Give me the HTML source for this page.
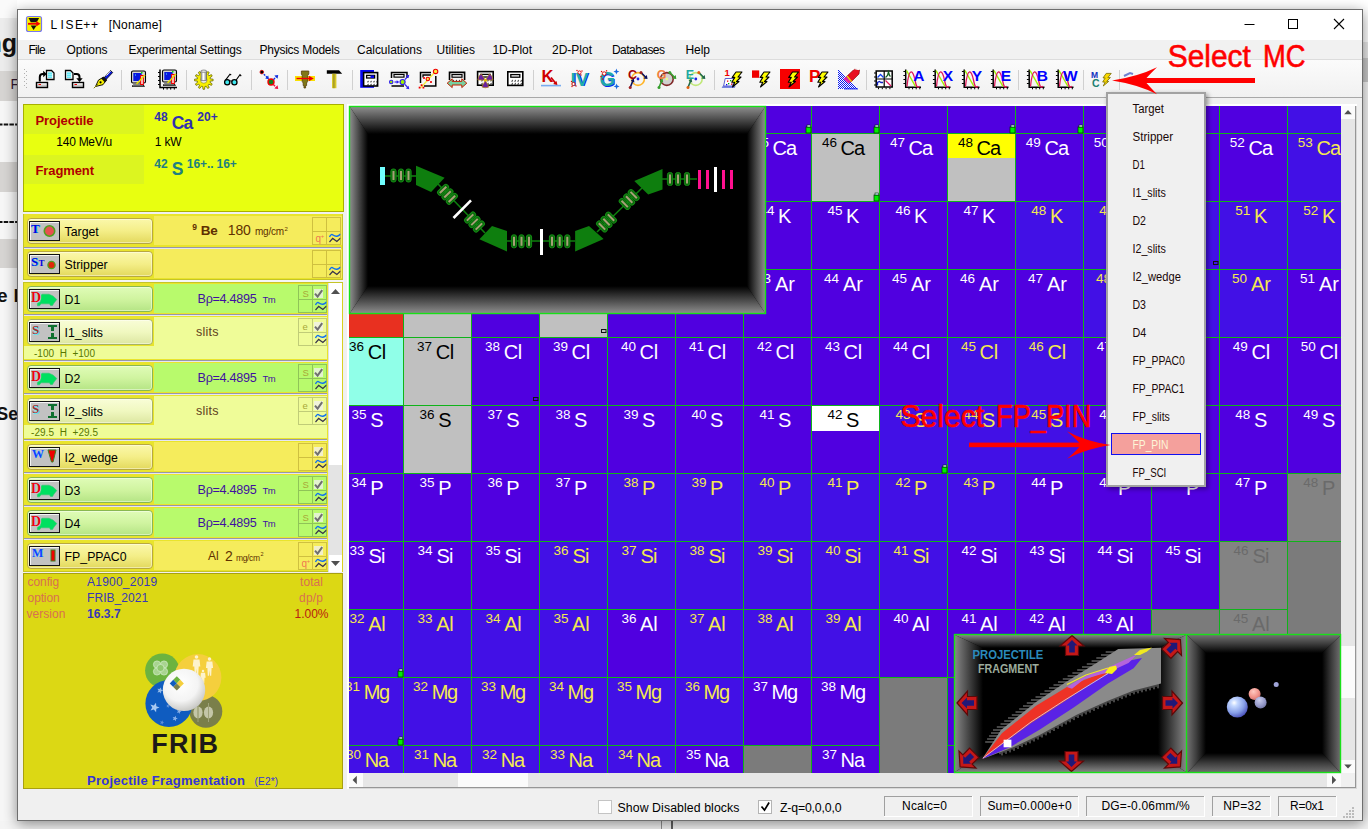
<!DOCTYPE html>
<html><head><meta charset="utf-8"><title>LISE++ [Noname]</title>
<style>html,body{margin:0;padding:0;background:#fff;overflow:hidden}svg{display:block}text{font-family:"Liberation Sans",sans-serif;white-space:pre}</style></head>
<body>
<svg width="1368" height="829" viewBox="0 0 1368 829">
<defs>
<filter id="wshadow" x="-5%" y="-5%" width="110%" height="112%"><feGaussianBlur in="SourceAlpha" stdDeviation="7"/><feOffset dy="3"/><feComponentTransfer><feFuncA type="linear" slope="0.45"/></feComponentTransfer><feMerge><feMergeNode/><feMergeNode in="SourceGraphic"/></feMerge></filter>
<linearGradient id="bg_yellow" x1="0" y1="0" x2="0" y2="1"><stop offset="0" stop-color="#fbf8ac"/><stop offset=".5" stop-color="#f4ee88"/><stop offset="1" stop-color="#e2d85c"/></linearGradient>
<linearGradient id="bg_green" x1="0" y1="0" x2="0" y2="1"><stop offset="0" stop-color="#e0fcb8"/><stop offset=".5" stop-color="#d0f4a0"/><stop offset="1" stop-color="#b4e484"/></linearGradient>
<linearGradient id="bg_pale" x1="0" y1="0" x2="0" y2="1"><stop offset="0" stop-color="#f9fdd8"/><stop offset=".5" stop-color="#f0f8c0"/><stop offset="1" stop-color="#dce6a0"/></linearGradient>
<radialGradient id="sphere" cx=".42" cy=".35" r=".75"><stop offset="0" stop-color="#ffffff"/><stop offset=".55" stop-color="#f4f4f4"/><stop offset="1" stop-color="#b8b8b4"/></radialGradient>

<linearGradient id="bvT" x1="0" y1="0" x2="0" y2="1"><stop offset="0" stop-color="#8c8c8c"/><stop offset="1" stop-color="#000"/></linearGradient>
<linearGradient id="bvB" x1="0" y1="1" x2="0" y2="0"><stop offset="0" stop-color="#8c8c8c"/><stop offset="1" stop-color="#000"/></linearGradient>
<linearGradient id="bvL" x1="0" y1="0" x2="1" y2="0"><stop offset="0" stop-color="#8c8c8c"/><stop offset="1" stop-color="#000"/></linearGradient>
<linearGradient id="bvR" x1="1" y1="0" x2="0" y2="0"><stop offset="0" stop-color="#8c8c8c"/><stop offset="1" stop-color="#000"/></linearGradient>
<linearGradient id="bwT" x1="0" y1="0" x2="0" y2="1"><stop offset="0" stop-color="#868686"/><stop offset="1" stop-color="#000"/></linearGradient>
<linearGradient id="bwB" x1="0" y1="1" x2="0" y2="0"><stop offset="0" stop-color="#868686"/><stop offset="1" stop-color="#000"/></linearGradient>
<linearGradient id="bwL" x1="0" y1="0" x2="1" y2="0"><stop offset="0" stop-color="#868686"/><stop offset="1" stop-color="#000"/></linearGradient>
<linearGradient id="bwR" x1="1" y1="0" x2="0" y2="0"><stop offset="0" stop-color="#868686"/><stop offset="1" stop-color="#000"/></linearGradient>
<radialGradient id="sphB" cx=".35" cy=".3" r=".8"><stop offset="0" stop-color="#ffffff"/><stop offset=".2" stop-color="#c4d8ff"/><stop offset=".6" stop-color="#88a0e8"/><stop offset="1" stop-color="#3c40b0"/></radialGradient>
<radialGradient id="sphP" cx=".4" cy=".3" r=".8"><stop offset="0" stop-color="#ffc8c0"/><stop offset=".6" stop-color="#f09088"/><stop offset="1" stop-color="#c06868"/></radialGradient>
<radialGradient id="sphG" cx=".4" cy=".3" r=".8"><stop offset="0" stop-color="#c8ccec"/><stop offset=".6" stop-color="#9498c8"/><stop offset="1" stop-color="#686c98"/></radialGradient>
<filter id="mshadow" x="-10%" y="-5%" width="125%" height="110%"><feGaussianBlur in="SourceAlpha" stdDeviation="2.5"/><feOffset dx="2" dy="2"/><feComponentTransfer><feFuncA type="linear" slope="0.4"/></feComponentTransfer><feMerge><feMergeNode/><feMergeNode in="SourceGraphic"/></feMerge></filter>
<linearGradient id="cyl" x1="0" y1="0" x2="1" y2="0"><stop offset="0" stop-color="#a0a0a0"/><stop offset=".45" stop-color="#ffffff"/><stop offset="1" stop-color="#808080"/></linearGradient>
<pattern id="chk" width="2" height="2" patternUnits="userSpaceOnUse"><rect width="2" height="2" fill="#fff"/><rect width="1" height="1" fill="#0818f0"/><rect x="1" y="1" width="1" height="1" fill="#0818f0"/></pattern>
<linearGradient id="tbg" x1="0" y1="0" x2="0" y2="1"><stop offset="0" stop-color="#fbfbfb"/><stop offset="1" stop-color="#f1f1f1"/></linearGradient>
<linearGradient id="bzT" x1="0" y1="0" x2="0" y2="1"><stop offset="0" stop-color="#727272"/><stop offset=".5" stop-color="#3c3c3c"/><stop offset="1" stop-color="#000"/></linearGradient>
<linearGradient id="bzB" x1="0" y1="1" x2="0" y2="0"><stop offset="0" stop-color="#727272"/><stop offset=".5" stop-color="#3c3c3c"/><stop offset="1" stop-color="#000"/></linearGradient>
<linearGradient id="bzL" x1="0" y1="0" x2="1" y2="0"><stop offset="0" stop-color="#727272"/><stop offset=".5" stop-color="#3c3c3c"/><stop offset="1" stop-color="#000"/></linearGradient>
<linearGradient id="bzR" x1="1" y1="0" x2="0" y2="0"><stop offset="0" stop-color="#727272"/><stop offset=".5" stop-color="#3c3c3c"/><stop offset="1" stop-color="#000"/></linearGradient>
</defs>

<rect x="0" y="0" width="1368" height="829" fill="#ffffff"/>
<rect x="0" y="0" width="17" height="18" fill="#fafafa"/>
<rect x="0" y="18" width="17" height="53" fill="#ececec"/>
<text x="-13.5" y="51.7" font-size="25" fill="#111" font-weight="bold">ng</text>
<rect x="0" y="71" width="17" height="30" fill="#d6d4d2"/>
<text x="10.5" y="89.4" font-size="14" fill="#301830">Fi</text>
<rect x="0" y="101" width="17" height="61" fill="#f6f6f6"/>
<path d="M-2 124.5H17" stroke="#111" stroke-width="2" stroke-dasharray="4.5 1.2"/>
<rect x="0" y="162" width="17" height="30" fill="#d6d4d2"/>
<rect x="0" y="192" width="17" height="47" fill="#f6f6f6"/>
<path d="M-2 222H17" stroke="#111" stroke-width="2" stroke-dasharray="4.5 1.2"/>
<rect x="0" y="239" width="17" height="29" fill="#d6d4d2"/>
<rect x="0" y="268" width="17" height="561" fill="#f6f6f6"/>
<text x="-3" y="301.5" font-size="19" fill="#111" font-weight="bold">e</text>
<text x="13.5" y="301.5" font-size="19" fill="#111" font-weight="bold">P</text>
<text x="-3.5" y="420" font-size="17.5" fill="#111" font-weight="bold">Se</text>
<rect x="1363" y="0" width="5" height="42" fill="#ffffff"/>
<rect x="1363" y="42" width="5" height="16" fill="#e8e8e8"/>
<rect x="1363" y="58" width="5" height="24" fill="#c8c8c8"/>
<rect x="1363" y="82" width="5" height="747" fill="#f4f4f4"/>
<rect x="0" y="821" width="1368" height="8" fill="#f4f4f4"/>
<rect x="661" y="821" width="1" height="8" fill="#909090"/>
<rect x="671" y="821" width="2" height="8" fill="#606060"/>
<rect x="17" y="9" width="1346" height="812" fill="#f0f0f0" filter="url(#wshadow)"/>
<rect x="17.5" y="9.5" width="1345" height="811" fill="#f0f0f0" stroke="#6e6e6e" stroke-width="1"/>
<rect x="18" y="10" width="1344" height="30" fill="#ffffff"/>
<rect x="26.5" y="16.5" width="15" height="15" fill="#f8f400" stroke="#7878f0" stroke-width="1.2" rx="2"/>
<path d="M28.5 18h10.6l-2.3 4.2h-6z" fill="#111"/>
<path d="M30.7 25.6h5.8l-2.9 4.4z" fill="#111"/>
<path d="M28 23.8h9" stroke="#f00000" stroke-width="1.8"/><path d="M36.2 21l4.2 2.8-4.2 2.8z" fill="#f00000"/>
<text x="50.4 57 60.6 63 65.4 72 75 81 83.2 89 91.1" y="28.8" font-size="12" fill="#000">L I S E + +</text>
<text x="108.8" y="28.8" font-size="12" fill="#000" textLength="53" lengthAdjust="spacing">[Noname]</text>
<path d="M1244.5 24.5h10" stroke="#000" stroke-width="1"/>
<rect x="1288.5" y="19.5" width="9" height="9" fill="none" stroke="#000" stroke-width="1"/>
<path d="M1334 19l10 10M1344 19l-10 10" stroke="#000" stroke-width="1.1"/>
<rect x="18" y="40" width="1344" height="19" fill="#f1f1f1"/>
<rect x="18" y="59" width="1344" height="1" fill="#dcdcdc"/>
<text x="28.4" y="53.8" font-size="12" fill="#000" textLength="17.4" lengthAdjust="spacing">File</text>
<text x="66.6" y="53.8" font-size="12" fill="#000" textLength="41" lengthAdjust="spacing">Options</text>
<text x="128.4" y="53.8" font-size="12" fill="#000" textLength="113.4" lengthAdjust="spacing">Experimental Settings</text>
<text x="259.5" y="53.8" font-size="12" fill="#000" textLength="80.2" lengthAdjust="spacing">Physics Models</text>
<text x="357" y="53.8" font-size="12" fill="#000" textLength="65" lengthAdjust="spacing">Calculations</text>
<text x="436.5" y="53.8" font-size="12" fill="#000" textLength="38.5" lengthAdjust="spacing">Utilities</text>
<text x="492.5" y="53.8" font-size="12" fill="#000" textLength="39.5" lengthAdjust="spacing">1D-Plot</text>
<text x="552" y="53.8" font-size="12" fill="#000" textLength="40" lengthAdjust="spacing">2D-Plot</text>
<text x="612" y="53.8" font-size="12" fill="#000" textLength="53" lengthAdjust="spacing">Databases</text>
<text x="685.5" y="53.8" font-size="12" fill="#000" textLength="24.5" lengthAdjust="spacing">Help</text>
<rect x="18" y="60" width="1344" height="37" fill="url(#tbg)"/>
<rect x="18" y="97" width="1344" height="1" fill="#a8a8a8"/>
<rect x="24" y="69" width="1" height="1" fill="#b0b0b0"/>
<rect x="26" y="71" width="1" height="1" fill="#b0b0b0"/>
<rect x="24" y="73" width="1" height="1" fill="#b0b0b0"/>
<rect x="26" y="75" width="1" height="1" fill="#b0b0b0"/>
<rect x="24" y="77" width="1" height="1" fill="#b0b0b0"/>
<rect x="26" y="79" width="1" height="1" fill="#b0b0b0"/>
<rect x="24" y="81" width="1" height="1" fill="#b0b0b0"/>
<rect x="26" y="83" width="1" height="1" fill="#b0b0b0"/>
<rect x="24" y="85" width="1" height="1" fill="#b0b0b0"/>
<rect x="26" y="87" width="1" height="1" fill="#b0b0b0"/>
<rect x="121" y="70" width="1" height="20" fill="#d0d0d0"/>
<rect x="186" y="70" width="1" height="20" fill="#d0d0d0"/>
<rect x="251" y="70" width="1" height="20" fill="#d0d0d0"/>
<rect x="287" y="70" width="1" height="20" fill="#d0d0d0"/>
<rect x="352" y="70" width="1" height="20" fill="#d0d0d0"/>
<rect x="533" y="70" width="1" height="20" fill="#d0d0d0"/>
<rect x="714" y="70" width="1" height="20" fill="#d0d0d0"/>
<rect x="866" y="70" width="1" height="20" fill="#d0d0d0"/>
<rect x="1018" y="70" width="1" height="20" fill="#d0d0d0"/>
<rect x="1083" y="70" width="1" height="20" fill="#d0d0d0"/>
<rect x="36.5" y="82.5" width="11" height="5" fill="#c8c8c8" stroke="#000" stroke-width="1.4"/>
<rect x="37.5" y="83.5" width="9" height="1" fill="#fff"/>
<rect x="38.5" y="84" width="2.5" height="1" fill="#f00000"/>
<path d="M46.5 70.5h5l2.5 2.5v6.5h-7.5z" fill="#fff" stroke="#000" stroke-width="1.3"/>
<rect x="47.8" y="72.6" width="4.4" height="1" fill="#00d8f0"/>
<rect x="47.8" y="74.6" width="4.4" height="1" fill="#00d8f0"/>
<rect x="47.8" y="76.6" width="4.4" height="1" fill="#00d8f0"/>
<path d="M39.8 81.5V77q0-3 3-3h1.5" fill="none" stroke="#000" stroke-width="2"/>
<path d="M43.2 70.8l3.6 3.2-3.6 3.2z" fill="#000"/>
<path d="M65.5 70.5h5l2.5 2.5v6.5h-7.5z" fill="#fff" stroke="#000" stroke-width="1.3"/>
<rect x="66.8" y="72.6" width="4.4" height="1" fill="#00d8f0"/>
<rect x="66.8" y="74.6" width="4.4" height="1" fill="#00d8f0"/>
<rect x="66.8" y="76.6" width="4.4" height="1" fill="#00d8f0"/>
<rect x="72.5" y="82.5" width="11" height="5" fill="#c8c8c8" stroke="#000" stroke-width="1.4"/>
<rect x="73.5" y="83.5" width="9" height="1" fill="#fff"/>
<rect x="74.5" y="84" width="2.5" height="1" fill="#f00000"/>
<path d="M74 74h2.5q3 0 3 3v2" fill="none" stroke="#000" stroke-width="2"/>
<path d="M76.3 78.2h6.4l-3.2 3.8z" fill="#000"/>
<path d="M103 79l7.5-8.5 2.2 2-8 8.5z" fill="#0818d8" stroke="#000" stroke-width="0.8"/>
<path d="M106.5 75.5l4-4.5" fill="none" stroke="#fff" stroke-width="1"/>
<path d="M95.5 86.5l3-6.5 4.5-2.5 3 3-3 4.2z" fill="#f8f000" stroke="#000" stroke-width="0.9"/>
<circle cx="100.5" cy="82.3" r="1.1" fill="#000"/>
<path d="M93.8 88.2l4.5-4.3" fill="none" stroke="#808000" stroke-width="1"/>
<path d="M101.2 78.6l2.6-2 3.4 3.4-2.2 2.4z" fill="#111"/>
<path d="M131.5 72.5q0-1.5 1.5-1.5h11q1.5 0 1.5 1.5v9q0 1.5-1.5 1.5h-11q-1.5 0-1.5-1.5z" fill="#d4d4d4" stroke="#000" stroke-width="1.1"/>
<rect x="133.3" y="73" width="8.4" height="8" fill="#0818e0"/>
<rect x="135.0" y="74.5" width="1" height="1" fill="#40f0ff"/>
<path d="M133.5 85h9.5l1.5 1.3h-12.5z" fill="#e8e8e8" stroke="#000" stroke-width="0.9"/>
<path d="M140.7 75.5h2.6v9h-2.6z" fill="#fff" stroke="#f00000" stroke-width="1.2"/>
<path d="M136.5 84l8.5-9" fill="none" stroke="#e8e000" stroke-width="1.4"/>
<rect x="141.0" y="72" width="1.5" height="1.5" fill="#00e000"/>
<path d="M162.5 71.5q0-1.5 1.5-1.5h11q1.5 0 1.5 1.5v9q0 1.5-1.5 1.5h-11q-1.5 0-1.5-1.5z" fill="#d4d4d4" stroke="#000" stroke-width="1.1"/>
<rect x="164.3" y="72" width="8.4" height="8" fill="#0818e0"/>
<rect x="166.0" y="73.5" width="1" height="1" fill="#40f0ff"/>
<path d="M164.5 84h9.5l1.5 1.3h-12.5z" fill="#e8e8e8" stroke="#000" stroke-width="0.9"/>
<path d="M171.7 74.5h2.6v9h-2.6z" fill="#fff" stroke="#f00000" stroke-width="1.2"/>
<path d="M167.5 83l8.5-9" fill="none" stroke="#e8e000" stroke-width="1.4"/>
<rect x="172.0" y="71" width="1.5" height="1.5" fill="#00e000"/>
<path d="M160 69.5V87.5H177" fill="none" stroke="#000" stroke-width="1.5"/>
<rect x="158" y="72" width="2" height="1" fill="#000"/>
<rect x="163.0" y="88" width="1" height="1.6" fill="#000"/>
<rect x="158" y="76" width="2" height="1" fill="#000"/>
<rect x="166.6" y="88" width="1" height="1.6" fill="#000"/>
<rect x="158" y="80" width="2" height="1" fill="#000"/>
<rect x="170.2" y="88" width="1" height="1.6" fill="#000"/>
<rect x="158" y="84" width="2" height="1" fill="#000"/>
<rect x="173.8" y="88" width="1" height="1.6" fill="#000"/>
<polygon points="213.1,79.2 213.1,80.8 210.3,81.1 210.0,82.3 212.2,83.9 211.4,85.4 208.9,84.2 208.0,85.1 209.2,87.6 207.7,88.4 206.1,86.2 204.9,86.5 204.6,89.3 203.0,89.3 202.7,86.5 201.5,86.2 199.9,88.4 198.4,87.6 199.6,85.1 198.7,84.2 196.2,85.4 195.4,83.9 197.6,82.3 197.3,81.1 194.5,80.8 194.5,79.2 197.3,78.9 197.6,77.7 195.4,76.1 196.2,74.6 198.7,75.8 199.6,74.9 198.4,72.4 199.9,71.6 201.5,73.8 202.7,73.5 203.0,70.7 204.6,70.7 204.9,73.5 206.1,73.8 207.7,71.6 209.2,72.4 208.0,74.9 208.9,75.8 211.4,74.6 212.2,76.1 210.0,77.7 210.3,78.9" fill="#f8f000" stroke="#6a6a00" stroke-width=".8"/>
<circle cx="203.8" cy="80" r="3.3" fill="#e8e8e8" stroke="#909000" stroke-width="0.6"/>
<rect x="201" y="71" width="5.6" height="9.5" fill="url(#cyl)" stroke="#606060" stroke-width=".6"/>
<ellipse cx="203.8" cy="71.2" rx="2.8" ry="1.2" fill="#e8e8e8" stroke="#606060" stroke-width=".6"/>
<circle cx="227.2" cy="82.2" r="2.6" fill="#40e8f0" stroke="#000" stroke-width="1.3"/>
<circle cx="234.4" cy="82.2" r="2.6" fill="#40e8f0" stroke="#000" stroke-width="1.3"/>
<path d="M229.6 81.3q1.2-1 2.4 0" fill="none" stroke="#000" stroke-width="1"/>
<path d="M225.5 80.2l4.5-6 1.2.8" fill="none" stroke="#000" stroke-width="1.1"/>
<path d="M236 80.2l4-5.5 1.2 1.5" fill="none" stroke="#000" stroke-width="1.1"/>
<circle cx="261.8" cy="72.1" r="1.8" fill="#000" stroke="#e00000" stroke-width="0.8"/>
<path d="M263.8 74.2l4 3.8" fill="none" stroke="#1030e0" stroke-width="1.4" stroke-dasharray="2 1"/>
<path d="M269 79.2l-3.8-.6 3-3z" fill="#1030e0"/>
<circle cx="271" cy="82" r="3" fill="#108020" stroke="#f00000" stroke-width="1.4"/>
<path d="M273.6 79.4l3-3" fill="none" stroke="#1030e0" stroke-width="1.4" stroke-dasharray="2 1"/>
<path d="M278.2 75l-3.8.6 3.2 3.2z" fill="#1030e0"/>
<path d="M273.6 84.8l3 3" fill="none" stroke="#f01040" stroke-width="1.4" stroke-dasharray="2 1"/>
<path d="M278.2 89l-3.8-.6 3.2-3.2z" fill="#f01040"/>
<rect x="295" y="76" width="20" height="5" fill="#f8e000"/>
<path d="M301.4 71h7.4v3l-1.2 1.5v6l-1 1.5v2.5h-1v2.5h-1.6v-2.5h-.8v-2.5l-1-1.5v-6l-.8-1.5z" fill="#807818" stroke="#584010" stroke-width="0.8"/>
<path d="M296.5 78.5h13" fill="none" stroke="#f00000" stroke-width="1.4"/>
<path d="M313.8 78.5l-5-2.8v5.6z" fill="#f00000"/>
<path d="M326.8 70.2h12.2l3.2 3.6h-15.4z" fill="#000"/>
<rect x="332" y="73.8" width="4.4" height="14.4" fill="#d8c828"/>
<rect x="333.2" y="73.8" width="1.4" height="14.4" fill="#a09828"/>
<rect x="360.2" y="70" width="13.8" height="17.8" fill="#0808f0"/>
<rect x="363.6" y="72.6" width="14" height="13.4" fill="#fff" stroke="#000" stroke-width="1.6"/>
<rect x="366.6" y="75.39999999999999" width="8" height="2.6" fill="#fff" stroke="#000" stroke-width="1.3"/>
<path d="M366.90000000000003 82.19999999999999l1.6-1.8v1.8z" fill="#000"/>
<path d="M369.90000000000003 82.19999999999999l1.6-1.8v1.8z" fill="#000"/>
<path d="M372.90000000000003 82.19999999999999l1.6-1.8v1.8z" fill="#000"/>
<path d="M375.90000000000003 82.19999999999999l1.6-1.8v1.8z" fill="#000"/>
<path d="M366.90000000000003 85.19999999999999l1.6-1.8v1.8z" fill="#000"/>
<path d="M369.90000000000003 85.19999999999999l1.6-1.8v1.8z" fill="#000"/>
<path d="M372.90000000000003 85.19999999999999l1.6-1.8v1.8z" fill="#000"/>
<path d="M375.90000000000003 85.19999999999999l1.6-1.8v1.8z" fill="#000"/>
<rect x="370.5" y="75.4" width="3.5" height="2.6" fill="#0808f0"/>
<path d="M391.5 78V72.4H407V78M391.5 86H404" fill="none" stroke="#000" stroke-width="1.5"/>
<rect x="394" y="74.5" width="10" height="2.6" fill="#fff" stroke="#000" stroke-width="1.2"/>
<circle cx="391.2" cy="82" r="1.7" fill="#a0f000" stroke="#3020f0" stroke-width="1.1"/>
<path d="M394.5 82h3" fill="none" stroke="#3020f0" stroke-width="1.2"/>
<path d="M399.3 82l-2.6-1.8v3.6z" fill="#3020f0"/>
<circle cx="402.6" cy="82" r="2.5" fill="#a0f000" stroke="#3020f0" stroke-width="1.2"/>
<path d="M405 79.5l2.6-2.8" fill="none" stroke="#3020f0" stroke-width="1.2"/>
<path d="M409.3 74.8l-3.4.8 2.6 2.6z" fill="#3020f0"/>
<path d="M405 84.5l2.6 2.8" fill="none" stroke="#3020f0" stroke-width="1.2"/>
<path d="M409.3 89.2l-3.4-.8 2.6-2.6z" fill="#3020f0"/>
<path d="M420.5 83V72.4H431M435.8 76V86H424" fill="none" stroke="#000" stroke-width="1.5"/>
<path d="M423 77.5V75h8" fill="none" stroke="#000" stroke-width="1.3"/>
<path d="M420.5 88l14-15.5" fill="none" stroke="#f8f040" stroke-width="1.3"/>
<circle cx="435.6" cy="71.4" r="2.2" fill="#f8f040" stroke="#f00000" stroke-width="1.1"/>
<circle cx="427.8" cy="79" r="1.7" fill="#f8f040" stroke="#f00000" stroke-width="1.1"/>
<rect x="420.70000000000005" y="84.3" width="1.8" height="1.8" fill="#f00000"/>
<rect x="422.5" y="86.69999999999999" width="1.8" height="1.8" fill="#f00000"/>
<rect x="418.70000000000005" y="86.69999999999999" width="1.8" height="1.8" fill="#f00000"/>
<rect x="430.1" y="81.1" width="1.8" height="1.8" fill="#f00000"/>
<rect x="423.1" y="77.1" width="1.8" height="1.8" fill="#f00000"/>
<path d="M449.5 80V72.4H464.6V80" fill="none" stroke="#000" stroke-width="1.6"/>
<rect x="452" y="74.6" width="10" height="2.6" fill="#fff" stroke="#000" stroke-width="1.2"/>
<path d="M452.3 81.4l1.6-1.8v1.8z" fill="#000"/>
<path d="M455.3 81.4l1.6-1.8v1.8z" fill="#000"/>
<path d="M458.3 81.4l1.6-1.8v1.8z" fill="#000"/>
<path d="M461.3 81.4l1.6-1.8v1.8z" fill="#000"/>
<path d="M447.2 83.2l5-4.4v2.6h9.6v-2.6l5 4.4-5 4.4v-2.6h-9.6v2.6z" fill="#78d0a0" stroke="#c02000" stroke-width="1"/>
<rect x="477.6" y="71.6" width="15.6" height="13.6" fill="#fff" stroke="#000" stroke-width="1.6"/>
<rect x="480.6" y="74.39999999999999" width="9.6" height="2.6" fill="#fff" stroke="#000" stroke-width="1.3"/>
<path d="M480.90000000000003 81.19999999999999l1.6-1.8v1.8z" fill="#000"/>
<path d="M483.90000000000003 81.19999999999999l1.6-1.8v1.8z" fill="#000"/>
<path d="M486.90000000000003 81.19999999999999l1.6-1.8v1.8z" fill="#000"/>
<path d="M489.90000000000003 81.19999999999999l1.6-1.8v1.8z" fill="#000"/>
<path d="M480.90000000000003 84.19999999999999l1.6-1.8v1.8z" fill="#000"/>
<path d="M483.90000000000003 84.19999999999999l1.6-1.8v1.8z" fill="#000"/>
<path d="M486.90000000000003 84.19999999999999l1.6-1.8v1.8z" fill="#000"/>
<path d="M489.90000000000003 84.19999999999999l1.6-1.8v1.8z" fill="#000"/>
<path d="M485.4 80.2L477.8 79.9A7.6 7.6 0 0 1 481.4 73.8Z" fill="#6820a0" stroke="#c8a000" stroke-width="0.6"/>
<path d="M485.4 80.2L489.4 73.8A7.6 7.6 0 0 1 493.0 79.9Z" fill="#6820a0" stroke="#c8a000" stroke-width="0.6"/>
<path d="M485.4 80.2L489.0 86.9A7.6 7.6 0 0 1 481.8 86.9Z" fill="#6820a0" stroke="#c8a000" stroke-width="0.6"/>
<circle cx="485.4" cy="80.2" r="1.4" fill="#e8c000"/>
<rect x="507.8" y="71.8" width="15" height="13.6" fill="#fff" stroke="#000" stroke-width="1.6"/>
<rect x="510.8" y="74.6" width="9" height="2.6" fill="#fff" stroke="#000" stroke-width="1.3"/>
<path d="M511.1 81.39999999999999l1.6-1.8v1.8z" fill="#000"/>
<path d="M514.1 81.39999999999999l1.6-1.8v1.8z" fill="#000"/>
<path d="M517.1 81.39999999999999l1.6-1.8v1.8z" fill="#000"/>
<path d="M520.1 81.39999999999999l1.6-1.8v1.8z" fill="#000"/>
<path d="M511.1 84.39999999999999l1.6-1.8v1.8z" fill="#000"/>
<path d="M514.1 84.39999999999999l1.6-1.8v1.8z" fill="#000"/>
<path d="M517.1 84.39999999999999l1.6-1.8v1.8z" fill="#000"/>
<path d="M520.1 84.39999999999999l1.6-1.8v1.8z" fill="#000"/>
<text x="541.6" y="82" font-size="16.5" fill="#d00000" font-weight="bold">K</text>
<path d="M551 77.5l4.5 5.5" fill="none" stroke="#d00000" stroke-width="1.8"/>
<path d="M557.5 85.3l-4.4-1.2 3.4-3z" fill="#d00000"/>
<rect x="541" y="84.8" width="20" height="1.6" fill="#78acf0"/>
<text x="571.4" y="86.4" font-size="19" fill="#0818f0" font-weight="bold" textLength="18" lengthAdjust="spacing">IV</text>
<text x="570.4" y="85.6" font-size="19" fill="#20b0a8" font-weight="bold" textLength="18" lengthAdjust="spacing">IV</text>
<circle cx="579.5" cy="72.5" r="1.6" fill="#fff" stroke="#e00000" stroke-width="0.9"/>
<circle cx="573.5" cy="84" r="1.6" fill="#fff" stroke="#e00000" stroke-width="0.9"/>
<rect x="576.4" y="69.9" width="1.2" height="1.2" fill="#e00000"/>
<rect x="581.4" y="70.4" width="1.2" height="1.2" fill="#e00000"/>
<rect x="580.4" y="74.4" width="1.2" height="1.2" fill="#e00000"/>
<rect x="570.9" y="80.9" width="1.2" height="1.2" fill="#e00000"/>
<rect x="575.4" y="85.4" width="1.2" height="1.2" fill="#e00000"/>
<rect x="571.4" y="85.9" width="1.2" height="1.2" fill="#e00000"/>
<text x="600.2" y="86.6" font-size="20" fill="#0828f0" font-weight="bold">G</text>
<text x="599.4" y="85.8" font-size="20" fill="#20a8a8" font-weight="bold">G</text>
<path d="M616.4 68.6l.8 2.2 2.2.8-2.2.8-.8 2.2-.8-2.2-2.2-.8 2.2-.8z" fill="#1868e0"/>
<path d="M616.6 83.4l.8 2.2 2.2.8-2.2.8-.8 2.2-.8-2.2-2.2-.8 2.2-.8z" fill="#1868e0"/>
<circle cx="604.2" cy="73.6" r="1.8" fill="#fff" stroke="#e00000" stroke-width="0.9"/>
<rect x="600.9" y="70.9" width="1.3" height="1.3" fill="#e00000"/>
<rect x="605.9" y="70.2" width="1.3" height="1.3" fill="#e00000"/>
<rect x="600.4" y="75.9" width="1.3" height="1.3" fill="#e00000"/>
<rect x="601.9" y="78.4" width="1.3" height="1.3" fill="#e00000"/>
<circle cx="638" cy="79" r="6.4" fill="none" stroke="#ffb428" stroke-width="1.6"/>
<circle cx="638" cy="79" r="1.4" fill="#2020e0"/>
<path d="M641 72.5l5.5 5.5" fill="none" stroke="#081060" stroke-width="1.6"/>
<path d="M647.5 79l-4-.6 3.4-3.4z" fill="#081060"/>
<path d="M630.2 87.5l2.8-7" fill="none" stroke="#081060" stroke-width="1.6"/>
<path d="M633.8 78.2l.6 4.2-3.6-1.6z" fill="#081060"/>
<circle cx="641" cy="72.5" r="1.5" fill="#a02020"/>
<circle cx="630.2" cy="87.5" r="1.5" fill="#a02020"/>
<text x="628" y="78.5" font-size="12.5" fill="#a00008" font-weight="bold">C</text>
<circle cx="666.8" cy="79" r="6.4" fill="#d0d0d0" stroke="#802828" stroke-width="1.6"/>
<circle cx="666.8" cy="79" r="1.4" fill="#e8f890"/>
<path d="M669.8 72.5l5.5 5.5" fill="none" stroke="#38a030" stroke-width="1.6"/>
<path d="M676.3 79l-4-.6 3.4-3.4z" fill="#38a030"/>
<path d="M659.0 87.5l2.8-7" fill="none" stroke="#38a030" stroke-width="1.6"/>
<path d="M662.5999999999999 78.2l.6 4.2-3.6-1.6z" fill="#38a030"/>
<circle cx="669.8" cy="72.5" r="1.5" fill="#38a030"/>
<circle cx="659.0" cy="87.5" r="1.5" fill="#38a030"/>
<text x="656.8" y="78.5" font-size="12.5" fill="#f08040" font-weight="bold">G</text>
<circle cx="695.8" cy="79" r="6.4" fill="none" stroke="#c0e878" stroke-width="1.6"/>
<circle cx="695.8" cy="79" r="1.4" fill="#2020e0"/>
<path d="M698.8 72.5l5.5 5.5" fill="none" stroke="#206848" stroke-width="1.6"/>
<path d="M705.3 79l-4-.6 3.4-3.4z" fill="#206848"/>
<path d="M688.0 87.5l2.8-7" fill="none" stroke="#206848" stroke-width="1.6"/>
<path d="M691.5999999999999 78.2l.6 4.2-3.6-1.6z" fill="#206848"/>
<circle cx="698.8" cy="72.5" r="1.5" fill="#e06010"/>
<circle cx="688.0" cy="87.5" r="1.5" fill="#e06010"/>
<text x="685.8" y="78.5" font-size="12.5" fill="#20a8a0" font-weight="bold">E</text>
<text x="724.4" y="76.2" font-size="9.5" fill="#f00000" font-weight="bold">1</text>
<path d="M725.2 78.5h9l-1.6 7.5h-9z" fill="#fff" stroke="#3838c0" stroke-width="0.8"/>
<path d="M722.6 86.2h13l-1 1.6h-13z" fill="#5060d8"/>
<rect x="727" y="80.5" width="1.3" height="1.3" fill="#f00000"/>
<rect x="730" y="80" width="1.3" height="1.3" fill="#00a000"/>
<rect x="728" y="83" width="1.3" height="1.3" fill="#00a000"/>
<rect x="731" y="83.5" width="1.3" height="1.3" fill="#f00000"/>
<rect x="726" y="84" width="1.3" height="1.3" fill="#0000f0"/>
<path transform="translate(731,72) scale(1)" d="M5 0H11L7 5H10L5.5 9.5H8L1.5 15L3.8 10.3H.8L3.8 5.4H1.2Z" fill="#ffff00" stroke="#000" stroke-width="1.1" stroke-linejoin="round"/>
<rect x="752" y="70.4" width="7.2" height="7.4" fill="#f00000"/>
<path transform="translate(759,72) scale(1)" d="M5 0H11L7 5H10L5.5 9.5H8L1.5 15L3.8 10.3H.8L3.8 5.4H1.2Z" fill="#ffff00" stroke="#000" stroke-width="1.1" stroke-linejoin="round"/>
<rect x="780" y="69" width="20" height="20" fill="#f80000"/>
<path transform="translate(787.5,72) scale(1)" d="M5 0H11L7 5H10L5.5 9.5H8L1.5 15L3.8 10.3H.8L3.8 5.4H1.2Z" fill="#ffff00" stroke="#000" stroke-width="1.1" stroke-linejoin="round"/>
<text x="809" y="81.8" font-size="17" fill="#f00000" font-weight="bold">P</text>
<path transform="translate(817,72) scale(1)" d="M5 0H11L7 5H10L5.5 9.5H8L1.5 15L3.8 10.3H.8L3.8 5.4H1.2Z" fill="#ffff00" stroke="#000" stroke-width="1.1" stroke-linejoin="round"/>
<polygon points="838,69 858,89 838,89" fill="url(#chk)"/>
<rect x="844" y="88.4" width="14" height="1" fill="#0818f0"/>
<path d="M846.5 76.5l8-7.5 5 1-.5 4-8 8z" fill="#e81020" stroke="#800000" stroke-width="0.6"/>
<path d="M846.5 76.5l4.5 5.5-2.5 1.5-5-4.5z" fill="#e020a0"/>
<path d="M847 76l4.6 5.6" fill="none" stroke="#f0e000" stroke-width="1.2"/>
<path d="M850 70.5l4.5-1.8 4.5 1" fill="none" stroke="#fff" stroke-width="1"/>
<rect x="876.2" y="71" width="16" height="16" fill="#fff" stroke="#000" stroke-width="1.5"/>
<path d="M884.2 71v16M876.2 79h16" fill="none" stroke="#000" stroke-width="1.2"/>
<rect x="874" y="72.5" width="2" height="1" fill="#000"/>
<rect x="878.0" y="87.6" width="1" height="1.6" fill="#000"/>
<rect x="874" y="76.5" width="2" height="1" fill="#000"/>
<rect x="881.8" y="87.6" width="1" height="1.6" fill="#000"/>
<rect x="874" y="80.5" width="2" height="1" fill="#000"/>
<rect x="885.6" y="87.6" width="1" height="1.6" fill="#000"/>
<rect x="874" y="84.5" width="2" height="1" fill="#000"/>
<rect x="889.4" y="87.6" width="1" height="1.6" fill="#000"/>
<path d="M877.5 77.5l3-3 3 3" fill="none" stroke="#1040f0" stroke-width="1.3"/>
<path d="M885.5 77.5l2-2 1-3.5 1 3.5 1 1" fill="none" stroke="#106020" stroke-width="1.3"/>
<path d="M877.5 85.5v-3l2-1 1.5 1h2" fill="none" stroke="#1020c0" stroke-width="1.3"/>
<path d="M885.5 80.5l5.5 5.5" fill="none" stroke="#e01860" stroke-width="1.3"/>
<path d="M905.7 69.5V87.2H921" fill="none" stroke="#000" stroke-width="1.5"/>
<rect x="903.4" y="71" width="2" height="1" fill="#000"/>
<rect x="903.4" y="75" width="2" height="1" fill="#000"/>
<rect x="903.4" y="79" width="2" height="1" fill="#000"/>
<rect x="903.4" y="83" width="2" height="1" fill="#000"/>
<rect x="908.5" y="87.5" width="1" height="1.8" fill="#000"/>
<rect x="912.1" y="87.5" width="1" height="1.8" fill="#000"/>
<rect x="915.7" y="87.5" width="1" height="1.8" fill="#000"/>
<rect x="919.3" y="87.5" width="1" height="1.8" fill="#000"/>
<path d="M906.5 70.5L915.5 86.5" fill="none" stroke="#a0f000" stroke-width="1.5"/>
<path d="M907 86.5C909 66 913 70 915 80S918 86.5 919.5 86.5" fill="none" stroke="#e01858" stroke-width="1.3"/>
<text x="913.3" y="80.5" font-size="15.5" fill="#0000ff" font-weight="bold" textLength="10" lengthAdjust="spacing">A</text>
<path d="M935.2 69.5V87.2H950.5" fill="none" stroke="#000" stroke-width="1.5"/>
<rect x="932.9" y="71" width="2" height="1" fill="#000"/>
<rect x="932.9" y="75" width="2" height="1" fill="#000"/>
<rect x="932.9" y="79" width="2" height="1" fill="#000"/>
<rect x="932.9" y="83" width="2" height="1" fill="#000"/>
<rect x="938.0" y="87.5" width="1" height="1.8" fill="#000"/>
<rect x="941.6" y="87.5" width="1" height="1.8" fill="#000"/>
<rect x="945.2" y="87.5" width="1" height="1.8" fill="#000"/>
<rect x="948.8" y="87.5" width="1" height="1.8" fill="#000"/>
<path d="M936.0 70.5L945.0 86.5" fill="none" stroke="#a0f000" stroke-width="1.5"/>
<path d="M936.5 86.5C938.5 66 942.5 70 944.5 80S947.5 86.5 949.0 86.5" fill="none" stroke="#e01858" stroke-width="1.3"/>
<text x="942.8" y="80.5" font-size="15.5" fill="#0000ff" font-weight="bold" textLength="10" lengthAdjust="spacing">X</text>
<path d="M964.2 69.5V87.2H979.5" fill="none" stroke="#000" stroke-width="1.5"/>
<rect x="961.9" y="71" width="2" height="1" fill="#000"/>
<rect x="961.9" y="75" width="2" height="1" fill="#000"/>
<rect x="961.9" y="79" width="2" height="1" fill="#000"/>
<rect x="961.9" y="83" width="2" height="1" fill="#000"/>
<rect x="967.0" y="87.5" width="1" height="1.8" fill="#000"/>
<rect x="970.6" y="87.5" width="1" height="1.8" fill="#000"/>
<rect x="974.2" y="87.5" width="1" height="1.8" fill="#000"/>
<rect x="977.8" y="87.5" width="1" height="1.8" fill="#000"/>
<path d="M965.0 70.5L974.0 86.5" fill="none" stroke="#a0f000" stroke-width="1.5"/>
<path d="M965.5 86.5C967.5 66 971.5 70 973.5 80S976.5 86.5 978.0 86.5" fill="none" stroke="#e01858" stroke-width="1.3"/>
<text x="971.8" y="80.5" font-size="15.5" fill="#0000ff" font-weight="bold" textLength="10" lengthAdjust="spacing">Y</text>
<path d="M993.2 69.5V87.2H1008.5" fill="none" stroke="#000" stroke-width="1.5"/>
<rect x="990.9" y="71" width="2" height="1" fill="#000"/>
<rect x="990.9" y="75" width="2" height="1" fill="#000"/>
<rect x="990.9" y="79" width="2" height="1" fill="#000"/>
<rect x="990.9" y="83" width="2" height="1" fill="#000"/>
<rect x="996.0" y="87.5" width="1" height="1.8" fill="#000"/>
<rect x="999.6" y="87.5" width="1" height="1.8" fill="#000"/>
<rect x="1003.2" y="87.5" width="1" height="1.8" fill="#000"/>
<rect x="1006.8" y="87.5" width="1" height="1.8" fill="#000"/>
<path d="M994.0 70.5L1003.0 86.5" fill="none" stroke="#a0f000" stroke-width="1.5"/>
<path d="M994.5 86.5C996.5 66 1000.5 70 1002.5 80S1005.5 86.5 1007.0 86.5" fill="none" stroke="#e01858" stroke-width="1.3"/>
<text x="1000.8" y="80.5" font-size="15.5" fill="#0000ff" font-weight="bold" textLength="9.5" lengthAdjust="spacing">E</text>
<path d="M1029.2 69.5V87.2H1044.5" fill="none" stroke="#000" stroke-width="1.5"/>
<rect x="1026.9" y="71" width="2" height="1" fill="#000"/>
<rect x="1026.9" y="75" width="2" height="1" fill="#000"/>
<rect x="1026.9" y="79" width="2" height="1" fill="#000"/>
<rect x="1026.9" y="83" width="2" height="1" fill="#000"/>
<rect x="1032.0" y="87.5" width="1" height="1.8" fill="#000"/>
<rect x="1035.6" y="87.5" width="1" height="1.8" fill="#000"/>
<rect x="1039.2" y="87.5" width="1" height="1.8" fill="#000"/>
<rect x="1042.8" y="87.5" width="1" height="1.8" fill="#000"/>
<path d="M1030.0 70.5L1039.0 86.5" fill="none" stroke="#a0f000" stroke-width="1.5"/>
<path d="M1030.5 86.5C1032.5 66 1036.5 70 1038.5 80S1041.5 86.5 1043.0 86.5" fill="none" stroke="#e01858" stroke-width="1.3"/>
<text x="1036.8" y="80.5" font-size="15.5" fill="#0000ff" font-weight="bold" textLength="10" lengthAdjust="spacing">B</text>
<path d="M1058.2 69.5V87.2H1073.5" fill="none" stroke="#000" stroke-width="1.5"/>
<rect x="1055.9" y="71" width="2" height="1" fill="#000"/>
<rect x="1055.9" y="75" width="2" height="1" fill="#000"/>
<rect x="1055.9" y="79" width="2" height="1" fill="#000"/>
<rect x="1055.9" y="83" width="2" height="1" fill="#000"/>
<rect x="1061.0" y="87.5" width="1" height="1.8" fill="#000"/>
<rect x="1064.6" y="87.5" width="1" height="1.8" fill="#000"/>
<rect x="1068.2" y="87.5" width="1" height="1.8" fill="#000"/>
<rect x="1071.8" y="87.5" width="1" height="1.8" fill="#000"/>
<path d="M1059.0 70.5L1068.0 86.5" fill="none" stroke="#a0f000" stroke-width="1.5"/>
<path d="M1059.5 86.5C1061.5 66 1065.5 70 1067.5 80S1070.5 86.5 1072.0 86.5" fill="none" stroke="#e01858" stroke-width="1.3"/>
<text x="1063.0" y="80.5" font-size="15.5" fill="#0000ff" font-weight="bold" textLength="13.5" lengthAdjust="spacing">W</text>
<text x="1091" y="78.2" font-size="8.5" fill="#1030c0" font-weight="bold">M</text>
<text x="1092" y="87" font-size="10.5" fill="#208070" font-weight="bold">C</text>
<path transform="translate(1102,73.4) scale(0.84)" d="M5 0H11L7 5H10L5.5 9.5H8L1.5 15L3.8 10.3H.8L3.8 5.4H1.2Z" fill="#f8d800" stroke="#807000" stroke-width="1" stroke-linejoin="round"/>
<rect x="1119" y="70" width="1" height="20" fill="#d0d0d0"/>
<path d="M1124 76l6-3 3 1" fill="none" stroke="#7080d0" stroke-width="2"/>
<rect x="23.5" y="104.5" width="320" height="107" fill="#e8ff10" stroke="#a8b000" stroke-width="1"/>
<rect x="24" y="105" width="120" height="29" fill="#dcf520"/>
<rect x="24" y="155" width="120" height="29" fill="#dcf520"/>
<text x="35.5" y="124.7" font-size="13" fill="#b00000" font-weight="bold" textLength="58" lengthAdjust="spacing">Projectile</text>
<text x="35.5" y="174.6" font-size="13" fill="#b00000" font-weight="bold" textLength="58.5" lengthAdjust="spacing">Fragment</text>
<text x="56.3" y="145.7" font-size="12" fill="#000" textLength="56" lengthAdjust="spacing">140 MeV/u</text>
<text x="154.7" y="145.7" font-size="12" fill="#000" textLength="27" lengthAdjust="spacing">1 kW</text>
<text x="154.2" y="121.3" font-size="12" fill="#3030b0" font-weight="bold" textLength="13.5" lengthAdjust="spacing">48</text>
<text x="171.8" y="128.8" font-size="17.5" fill="#3030b0" font-weight="bold" textLength="21.5" lengthAdjust="spacing">Ca</text>
<text x="197.2" y="121.3" font-size="12" fill="#3030b0" font-weight="bold" textLength="20.5" lengthAdjust="spacing">20+</text>
<text x="154.2" y="167.5" font-size="12" fill="#208080" font-weight="bold" textLength="13.5" lengthAdjust="spacing">42</text>
<text x="171.8" y="174.6" font-size="17.5" fill="#208080" font-weight="bold">S</text>
<text x="186.8" y="167.5" font-size="12" fill="#208080" font-weight="bold" textLength="50" lengthAdjust="spacing">16+.. 16+</text>
<rect x="23" y="214" width="320" height="66" fill="#e9e42c"/>
<rect x="23" y="214" width="320" height="1" fill="#c4c428"/>
<rect x="23" y="214" width="1" height="66" fill="#c4c428"/>
<rect x="342" y="214" width="1" height="66" fill="#c4c428"/>
<rect x="23" y="214" width="320" height="33" fill="#e9e42c"/>
<rect x="154" y="216" width="188" height="29" fill="#f5ec5c"/>
<rect x="27.5" y="218.5" width="125" height="25" rx="3.5" fill="url(#bg_yellow)" stroke="#b8a840"/>
<rect x="28.5" y="219.5" width="123" height="23" rx="2.5" fill="none" stroke="#ffffff" stroke-opacity=".45"/>
<rect x="29" y="221" width="31" height="20" fill="#111"/>
<rect x="30" y="222" width="29" height="18" fill="#c2c2c2"/>
<rect x="30" y="222" width="29" height="1" fill="#f4f4f4"/>
<rect x="30" y="222" width="1" height="18" fill="#f4f4f4"/>
<text x="31.5" y="233" font-size="13" fill="#00e8ff" font-weight="bold" style="font-family:'Liberation Serif',serif">T</text>
<text x="31" y="232.5" font-size="13" fill="#0000e0" font-weight="bold" style="font-family:'Liberation Serif',serif">T</text>
<circle cx="49.5" cy="231" r="5.2" fill="#e85050" stroke="#50a020" stroke-width="1.6"/>
<text x="64.6" y="235.8" font-size="12.3" fill="#000">Target</text>
<rect x="312.5" y="217.5" width="28" height="27" fill="none" stroke="#cfc040"/>
<rect x="326" y="217" width="1" height="27" fill="#cfc040"/>
<rect x="312" y="231" width="28" height="1" fill="#cfc040"/>
<clipPath id="wc218"><rect x="312" y="218" width="28.5" height="27"/></clipPath><g clip-path="url(#wc218)">
<path d="M329.5 237.0q1.5-3.5 3.5-2t4 1.2 3.5-2.2" fill="none" stroke="#1070f0" stroke-width="1.4"/>
<path d="M329.5 242.0l3.2-3.6 4.2 3 3.6-3.4" fill="none" stroke="#38344c" stroke-width="1.2"/>
</g>
<text x="315.5" y="242" font-size="10" fill="#f07850">q</text>
<text x="320.8" y="237.5" font-size="6" fill="#f07850">+</text>
<text x="192.3" y="229.5" font-size="8.5" fill="#603000" font-weight="bold">9</text>
<text x="200.7" y="235.2" font-size="13.5" fill="#603000" font-weight="bold" textLength="17" lengthAdjust="spacing">Be</text>
<text x="227.8" y="235.2" font-size="14" fill="#603000" textLength="23" lengthAdjust="spacing">180</text>
<text x="255" y="235.2" font-size="10" fill="#603000" textLength="29" lengthAdjust="spacing">mg/cm</text>
<text x="284.5" y="230.5" font-size="6" fill="#603000">2</text>
<rect x="23" y="247" width="320" height="33" fill="#e9e42c"/>
<rect x="154" y="249" width="188" height="29" fill="#f5ec5c"/>
<rect x="27.5" y="251.5" width="125" height="25" rx="3.5" fill="url(#bg_yellow)" stroke="#b8a840"/>
<rect x="28.5" y="252.5" width="123" height="23" rx="2.5" fill="none" stroke="#ffffff" stroke-opacity=".45"/>
<rect x="29" y="254" width="31" height="20" fill="#111"/>
<rect x="30" y="255" width="29" height="18" fill="#c2c2c2"/>
<rect x="30" y="255" width="29" height="1" fill="#f4f4f4"/>
<rect x="30" y="255" width="1" height="18" fill="#f4f4f4"/>
<text x="31.5" y="266" font-size="13" fill="#00e8ff" font-weight="bold" style="font-family:'Liberation Serif',serif">S</text>
<text x="31" y="265.5" font-size="13" fill="#0000e0" font-weight="bold" style="font-family:'Liberation Serif',serif">S</text>
<text x="38.5" y="265.5" font-size="9" fill="#0000e0" font-weight="bold" style="font-family:'Liberation Serif',serif">T</text>
<circle cx="51.5" cy="265" r="3.6" fill="#e02808" stroke="#50a020" stroke-width="1.3"/>
<text x="64.6" y="268.8" font-size="12.3" fill="#000">Stripper</text>
<rect x="312.5" y="250.5" width="28" height="27" fill="none" stroke="#cfc040"/>
<rect x="326" y="250" width="1" height="27" fill="#cfc040"/>
<rect x="312" y="264" width="28" height="1" fill="#cfc040"/>
<clipPath id="wc251"><rect x="312" y="251" width="28.5" height="27"/></clipPath><g clip-path="url(#wc251)">
<path d="M329.5 270.0q1.5-3.5 3.5-2t4 1.2 3.5-2.2" fill="none" stroke="#1070f0" stroke-width="1.4"/>
<path d="M329.5 275.0l3.2-3.6 4.2 3 3.6-3.4" fill="none" stroke="#38344c" stroke-width="1.2"/>
</g>
<rect x="24" y="247" width="317" height="1" fill="#9898a6"/>
<rect x="24" y="248" width="317" height="1" fill="#e6e6f2"/>
<rect x="23" y="279" width="320" height="1" fill="#c4c428"/>
<rect x="23" y="214" width="1" height="66" fill="#c4c428"/>
<rect x="342" y="214" width="1" height="66" fill="#c4c428"/>
<rect x="23" y="280" width="321" height="2" fill="#f6f6f6"/>
<rect x="23" y="282" width="320" height="290" fill="#e9e42c"/>
<rect x="23" y="283" width="305" height="31" fill="#e9e42c"/>
<rect x="154" y="284" width="173" height="29" fill="#b8fa6c"/>
<rect x="27.5" y="286.5" width="125" height="25" rx="3.5" fill="url(#bg_green)" stroke="#88b850"/>
<rect x="28.5" y="287.5" width="123" height="23" rx="2.5" fill="none" stroke="#ffffff" stroke-opacity=".45"/>
<rect x="29" y="289" width="31" height="20" fill="#111"/>
<rect x="30" y="290" width="29" height="18" fill="#c2c2c2"/>
<rect x="30" y="290" width="29" height="1" fill="#f4f4f4"/>
<rect x="30" y="290" width="1" height="18" fill="#f4f4f4"/>
<path d="M42 294.2h7l4 1.8 3.8 3.5-2.8 3.5-1.5 2.5h-2l-1-1.7h-8.5l-1.5 2h-2l-.2-2.3 3.2-2v-5.5z" fill="#00e060" stroke="#30c870" stroke-width=".6"/>
<text x="31.6" y="302.4" font-size="14" fill="#60ffff" font-weight="bold" style="font-family:'Liberation Serif',serif">D</text>
<text x="31" y="302" font-size="14" fill="#f00010" font-weight="bold" style="font-family:'Liberation Serif',serif">D</text>
<text x="64.6" y="303.8" font-size="12.3" fill="#000">D1</text>
<rect x="298.5" y="285.5" width="28" height="27" fill="none" stroke="#8fc458"/>
<rect x="312" y="285" width="1" height="27" fill="#8fc458"/>
<rect x="298" y="299" width="28" height="1" fill="#8fc458"/>
<clipPath id="wc286"><rect x="298" y="286" width="28.5" height="27"/></clipPath><g clip-path="url(#wc286)">
<path d="M315.5 305.0q1.5-3.5 3.5-2t4 1.2 3.5-2.2" fill="none" stroke="#1070f0" stroke-width="1.4"/>
<path d="M315.5 310.0l3.2-3.6 4.2 3 3.6-3.4" fill="none" stroke="#38344c" stroke-width="1.2"/>
</g>
<rect x="314" y="289" width="9" height="9" fill="#f0f0f0" fill-opacity=".75"/>
<path d="M315 293.6l2.6 3 4.6-6.4" fill="none" stroke="#707070" stroke-width="2"/>
<text x="302.6" y="297.2" font-size="9.5" fill="#a8a838">S</text>
<text x="197.5" y="302.8" font-size="12.6" fill="#4010a0" textLength="59.3" lengthAdjust="spacing">Bρ=4.4895</text>
<text x="262.5" y="302.8" font-size="9.5" fill="#4010a0">T</text>
<text x="267.8" y="302.8" font-size="9.5" fill="#4010a0">m</text>
<rect x="23" y="316" width="305" height="44" fill="#e9e42c"/>
<rect x="154" y="317" width="173" height="42" fill="#effc98"/>
<rect x="24" y="346" width="130" height="13" fill="#effc98"/>
<rect x="27.5" y="319.5" width="125" height="25" rx="3.5" fill="url(#bg_pale)" stroke="#a8b460"/>
<rect x="28.5" y="320.5" width="123" height="23" rx="2.5" fill="none" stroke="#ffffff" stroke-opacity=".45"/>
<rect x="29" y="322" width="31" height="20" fill="#111"/>
<rect x="30" y="323" width="29" height="18" fill="#c2c2c2"/>
<rect x="30" y="323" width="29" height="1" fill="#f4f4f4"/>
<rect x="30" y="323" width="1" height="18" fill="#f4f4f4"/>
<text x="32.5" y="334.5" font-size="13" fill="#40f0ff" font-weight="bold" style="font-family:'Liberation Serif',serif">S</text>
<text x="32" y="334" font-size="13" fill="#a03030" font-weight="bold" style="font-family:'Liberation Serif',serif">S</text>
<path d="M48 325h9v2h-3v4h-3v-4h-3z M51 333h3v4h3v2h-9v-2h3z" fill="#107030"/>
<text x="64.6" y="336.8" font-size="12.3" fill="#000">I1_slits</text>
<rect x="298.5" y="318.5" width="28" height="27" fill="none" stroke="#c0cc78"/>
<rect x="312" y="318" width="1" height="27" fill="#c0cc78"/>
<rect x="298" y="332" width="28" height="1" fill="#c0cc78"/>
<clipPath id="wc319"><rect x="298" y="319" width="28.5" height="27"/></clipPath><g clip-path="url(#wc319)">
<path d="M315.5 338.0q1.5-3.5 3.5-2t4 1.2 3.5-2.2" fill="none" stroke="#1070f0" stroke-width="1.4"/>
<path d="M315.5 343.0l3.2-3.6 4.2 3 3.6-3.4" fill="none" stroke="#38344c" stroke-width="1.2"/>
</g>
<rect x="314" y="322" width="9" height="9" fill="#f0f0f0" fill-opacity=".75"/>
<path d="M315 326.6l2.6 3 4.6-6.4" fill="none" stroke="#707070" stroke-width="2"/>
<text x="302.6" y="330.2" font-size="9.5" fill="#a8a838">e</text>
<text x="196" y="335.8" font-size="12.5" fill="#604020" textLength="22.5" lengthAdjust="spacing">slits</text>
<text x="34" y="356.8" font-size="10" fill="#587800" textLength="61" lengthAdjust="spacing">-100  H  +100</text>
<rect x="23" y="362" width="305" height="31" fill="#e9e42c"/>
<rect x="154" y="363" width="173" height="29" fill="#b8fa6c"/>
<rect x="27.5" y="365.5" width="125" height="25" rx="3.5" fill="url(#bg_green)" stroke="#88b850"/>
<rect x="28.5" y="366.5" width="123" height="23" rx="2.5" fill="none" stroke="#ffffff" stroke-opacity=".45"/>
<rect x="29" y="368" width="31" height="20" fill="#111"/>
<rect x="30" y="369" width="29" height="18" fill="#c2c2c2"/>
<rect x="30" y="369" width="29" height="1" fill="#f4f4f4"/>
<rect x="30" y="369" width="1" height="18" fill="#f4f4f4"/>
<path d="M42 373.2h7l4 1.8 3.8 3.5-2.8 3.5-1.5 2.5h-2l-1-1.7h-8.5l-1.5 2h-2l-.2-2.3 3.2-2v-5.5z" fill="#00e060" stroke="#30c870" stroke-width=".6"/>
<text x="31.6" y="381.4" font-size="14" fill="#60ffff" font-weight="bold" style="font-family:'Liberation Serif',serif">D</text>
<text x="31" y="381" font-size="14" fill="#f00010" font-weight="bold" style="font-family:'Liberation Serif',serif">D</text>
<text x="64.6" y="382.8" font-size="12.3" fill="#000">D2</text>
<rect x="298.5" y="364.5" width="28" height="27" fill="none" stroke="#8fc458"/>
<rect x="312" y="364" width="1" height="27" fill="#8fc458"/>
<rect x="298" y="378" width="28" height="1" fill="#8fc458"/>
<clipPath id="wc365"><rect x="298" y="365" width="28.5" height="27"/></clipPath><g clip-path="url(#wc365)">
<path d="M315.5 384.0q1.5-3.5 3.5-2t4 1.2 3.5-2.2" fill="none" stroke="#1070f0" stroke-width="1.4"/>
<path d="M315.5 389.0l3.2-3.6 4.2 3 3.6-3.4" fill="none" stroke="#38344c" stroke-width="1.2"/>
</g>
<rect x="314" y="368" width="9" height="9" fill="#f0f0f0" fill-opacity=".75"/>
<path d="M315 372.6l2.6 3 4.6-6.4" fill="none" stroke="#707070" stroke-width="2"/>
<text x="302.6" y="376.2" font-size="9.5" fill="#a8a838">S</text>
<text x="197.5" y="381.8" font-size="12.6" fill="#4010a0" textLength="59.3" lengthAdjust="spacing">Bρ=4.4895</text>
<text x="262.5" y="381.8" font-size="9.5" fill="#4010a0">T</text>
<text x="267.8" y="381.8" font-size="9.5" fill="#4010a0">m</text>
<rect x="23" y="395" width="305" height="44" fill="#e9e42c"/>
<rect x="154" y="396" width="173" height="42" fill="#effc98"/>
<rect x="24" y="425" width="130" height="13" fill="#effc98"/>
<rect x="27.5" y="398.5" width="125" height="25" rx="3.5" fill="url(#bg_pale)" stroke="#a8b460"/>
<rect x="28.5" y="399.5" width="123" height="23" rx="2.5" fill="none" stroke="#ffffff" stroke-opacity=".45"/>
<rect x="29" y="401" width="31" height="20" fill="#111"/>
<rect x="30" y="402" width="29" height="18" fill="#c2c2c2"/>
<rect x="30" y="402" width="29" height="1" fill="#f4f4f4"/>
<rect x="30" y="402" width="1" height="18" fill="#f4f4f4"/>
<text x="32.5" y="413.5" font-size="13" fill="#40f0ff" font-weight="bold" style="font-family:'Liberation Serif',serif">S</text>
<text x="32" y="413" font-size="13" fill="#a03030" font-weight="bold" style="font-family:'Liberation Serif',serif">S</text>
<path d="M48 404h9v2h-3v4h-3v-4h-3z M51 412h3v4h3v2h-9v-2h3z" fill="#107030"/>
<text x="64.6" y="415.8" font-size="12.3" fill="#000">I2_slits</text>
<rect x="298.5" y="397.5" width="28" height="27" fill="none" stroke="#c0cc78"/>
<rect x="312" y="397" width="1" height="27" fill="#c0cc78"/>
<rect x="298" y="411" width="28" height="1" fill="#c0cc78"/>
<clipPath id="wc398"><rect x="298" y="398" width="28.5" height="27"/></clipPath><g clip-path="url(#wc398)">
<path d="M315.5 417.0q1.5-3.5 3.5-2t4 1.2 3.5-2.2" fill="none" stroke="#1070f0" stroke-width="1.4"/>
<path d="M315.5 422.0l3.2-3.6 4.2 3 3.6-3.4" fill="none" stroke="#38344c" stroke-width="1.2"/>
</g>
<rect x="314" y="401" width="9" height="9" fill="#f0f0f0" fill-opacity=".75"/>
<path d="M315 405.6l2.6 3 4.6-6.4" fill="none" stroke="#707070" stroke-width="2"/>
<text x="302.6" y="409.2" font-size="9.5" fill="#a8a838">e</text>
<text x="196" y="414.8" font-size="12.5" fill="#604020" textLength="22.5" lengthAdjust="spacing">slits</text>
<text x="31" y="435.8" font-size="10" fill="#587800" textLength="67" lengthAdjust="spacing">-29.5  H  +29.5</text>
<rect x="23" y="441" width="305" height="31" fill="#e9e42c"/>
<rect x="154" y="442" width="173" height="29" fill="#f5ec5c"/>
<rect x="27.5" y="444.5" width="125" height="25" rx="3.5" fill="url(#bg_yellow)" stroke="#b8a840"/>
<rect x="28.5" y="445.5" width="123" height="23" rx="2.5" fill="none" stroke="#ffffff" stroke-opacity=".45"/>
<rect x="29" y="447" width="31" height="20" fill="#111"/>
<rect x="30" y="448" width="29" height="18" fill="#c2c2c2"/>
<rect x="30" y="448" width="29" height="1" fill="#f4f4f4"/>
<rect x="30" y="448" width="1" height="18" fill="#f4f4f4"/>
<text x="32.3" y="458.3" font-size="12" fill="#70f0ff" font-weight="bold" style="font-family:'Liberation Serif',serif">W</text>
<text x="32" y="458" font-size="12" fill="#1040ff" font-weight="bold" style="font-family:'Liberation Serif',serif">W</text>
<path d="M48 450h8l-3 12h-1.5z" fill="#f00000" stroke="#408020" stroke-width="1"/>
<text x="64.6" y="461.8" font-size="12.3" fill="#000">I2_wedge</text>
<rect x="298.5" y="443.5" width="28" height="27" fill="none" stroke="#cfc040"/>
<rect x="312" y="443" width="1" height="27" fill="#cfc040"/>
<rect x="298" y="457" width="28" height="1" fill="#cfc040"/>
<clipPath id="wc444"><rect x="298" y="444" width="28.5" height="27"/></clipPath><g clip-path="url(#wc444)">
<path d="M315.5 463.0q1.5-3.5 3.5-2t4 1.2 3.5-2.2" fill="none" stroke="#1070f0" stroke-width="1.4"/>
<path d="M315.5 468.0l3.2-3.6 4.2 3 3.6-3.4" fill="none" stroke="#38344c" stroke-width="1.2"/>
</g>
<rect x="314" y="447" width="9" height="9" fill="#f0f0f0" fill-opacity=".75"/>
<path d="M315 451.6l2.6 3 4.6-6.4" fill="none" stroke="#707070" stroke-width="2"/>
<rect x="23" y="474" width="305" height="31" fill="#e9e42c"/>
<rect x="154" y="475" width="173" height="29" fill="#b8fa6c"/>
<rect x="27.5" y="477.5" width="125" height="25" rx="3.5" fill="url(#bg_green)" stroke="#88b850"/>
<rect x="28.5" y="478.5" width="123" height="23" rx="2.5" fill="none" stroke="#ffffff" stroke-opacity=".45"/>
<rect x="29" y="480" width="31" height="20" fill="#111"/>
<rect x="30" y="481" width="29" height="18" fill="#c2c2c2"/>
<rect x="30" y="481" width="29" height="1" fill="#f4f4f4"/>
<rect x="30" y="481" width="1" height="18" fill="#f4f4f4"/>
<path d="M42 485.2h7l4 1.8 3.8 3.5-2.8 3.5-1.5 2.5h-2l-1-1.7h-8.5l-1.5 2h-2l-.2-2.3 3.2-2v-5.5z" fill="#00e060" stroke="#30c870" stroke-width=".6"/>
<text x="31.6" y="493.4" font-size="14" fill="#60ffff" font-weight="bold" style="font-family:'Liberation Serif',serif">D</text>
<text x="31" y="493" font-size="14" fill="#f00010" font-weight="bold" style="font-family:'Liberation Serif',serif">D</text>
<text x="64.6" y="494.8" font-size="12.3" fill="#000">D3</text>
<rect x="298.5" y="476.5" width="28" height="27" fill="none" stroke="#8fc458"/>
<rect x="312" y="476" width="1" height="27" fill="#8fc458"/>
<rect x="298" y="490" width="28" height="1" fill="#8fc458"/>
<clipPath id="wc477"><rect x="298" y="477" width="28.5" height="27"/></clipPath><g clip-path="url(#wc477)">
<path d="M315.5 496.0q1.5-3.5 3.5-2t4 1.2 3.5-2.2" fill="none" stroke="#1070f0" stroke-width="1.4"/>
<path d="M315.5 501.0l3.2-3.6 4.2 3 3.6-3.4" fill="none" stroke="#38344c" stroke-width="1.2"/>
</g>
<rect x="314" y="480" width="9" height="9" fill="#f0f0f0" fill-opacity=".75"/>
<path d="M315 484.6l2.6 3 4.6-6.4" fill="none" stroke="#707070" stroke-width="2"/>
<text x="302.6" y="488.2" font-size="9.5" fill="#a8a838">S</text>
<text x="197.5" y="493.8" font-size="12.6" fill="#4010a0" textLength="59.3" lengthAdjust="spacing">Bρ=4.4895</text>
<text x="262.5" y="493.8" font-size="9.5" fill="#4010a0">T</text>
<text x="267.8" y="493.8" font-size="9.5" fill="#4010a0">m</text>
<rect x="23" y="507" width="305" height="31" fill="#e9e42c"/>
<rect x="154" y="508" width="173" height="29" fill="#b8fa6c"/>
<rect x="27.5" y="510.5" width="125" height="25" rx="3.5" fill="url(#bg_green)" stroke="#88b850"/>
<rect x="28.5" y="511.5" width="123" height="23" rx="2.5" fill="none" stroke="#ffffff" stroke-opacity=".45"/>
<rect x="29" y="513" width="31" height="20" fill="#111"/>
<rect x="30" y="514" width="29" height="18" fill="#c2c2c2"/>
<rect x="30" y="514" width="29" height="1" fill="#f4f4f4"/>
<rect x="30" y="514" width="1" height="18" fill="#f4f4f4"/>
<path d="M42 518.2h7l4 1.8 3.8 3.5-2.8 3.5-1.5 2.5h-2l-1-1.7h-8.5l-1.5 2h-2l-.2-2.3 3.2-2v-5.5z" fill="#00e060" stroke="#30c870" stroke-width=".6"/>
<text x="31.6" y="526.4" font-size="14" fill="#60ffff" font-weight="bold" style="font-family:'Liberation Serif',serif">D</text>
<text x="31" y="526" font-size="14" fill="#f00010" font-weight="bold" style="font-family:'Liberation Serif',serif">D</text>
<text x="64.6" y="527.8" font-size="12.3" fill="#000">D4</text>
<rect x="298.5" y="509.5" width="28" height="27" fill="none" stroke="#8fc458"/>
<rect x="312" y="509" width="1" height="27" fill="#8fc458"/>
<rect x="298" y="523" width="28" height="1" fill="#8fc458"/>
<clipPath id="wc510"><rect x="298" y="510" width="28.5" height="27"/></clipPath><g clip-path="url(#wc510)">
<path d="M315.5 529.0q1.5-3.5 3.5-2t4 1.2 3.5-2.2" fill="none" stroke="#1070f0" stroke-width="1.4"/>
<path d="M315.5 534.0l3.2-3.6 4.2 3 3.6-3.4" fill="none" stroke="#38344c" stroke-width="1.2"/>
</g>
<rect x="314" y="513" width="9" height="9" fill="#f0f0f0" fill-opacity=".75"/>
<path d="M315 517.6l2.6 3 4.6-6.4" fill="none" stroke="#707070" stroke-width="2"/>
<text x="302.6" y="521.2" font-size="9.5" fill="#a8a838">S</text>
<text x="197.5" y="526.8" font-size="12.6" fill="#4010a0" textLength="59.3" lengthAdjust="spacing">Bρ=4.4895</text>
<text x="262.5" y="526.8" font-size="9.5" fill="#4010a0">T</text>
<text x="267.8" y="526.8" font-size="9.5" fill="#4010a0">m</text>
<rect x="23" y="540" width="305" height="31" fill="#e9e42c"/>
<rect x="154" y="541" width="173" height="29" fill="#f5ec5c"/>
<rect x="27.5" y="543.5" width="125" height="25" rx="3.5" fill="url(#bg_yellow)" stroke="#b8a840"/>
<rect x="28.5" y="544.5" width="123" height="23" rx="2.5" fill="none" stroke="#ffffff" stroke-opacity=".45"/>
<rect x="29" y="546" width="31" height="20" fill="#111"/>
<rect x="30" y="547" width="29" height="18" fill="#c2c2c2"/>
<rect x="30" y="547" width="29" height="1" fill="#f4f4f4"/>
<rect x="30" y="547" width="1" height="18" fill="#f4f4f4"/>
<text x="32.3" y="557.3" font-size="12" fill="#70f0ff" font-weight="bold" style="font-family:'Liberation Serif',serif">M</text>
<text x="32" y="557" font-size="12" fill="#1040ff" font-weight="bold" style="font-family:'Liberation Serif',serif">M</text>
<rect x="51" y="550" width="4" height="11" fill="#f00000" stroke="#408020" stroke-width="1"/>
<text x="64.6" y="560.8" font-size="12.3" fill="#000">FP_PPAC0</text>
<rect x="298.5" y="542.5" width="28" height="27" fill="none" stroke="#cfc040"/>
<rect x="312" y="542" width="1" height="27" fill="#cfc040"/>
<rect x="298" y="556" width="28" height="1" fill="#cfc040"/>
<clipPath id="wc543"><rect x="298" y="543" width="28.5" height="27"/></clipPath><g clip-path="url(#wc543)">
<path d="M315.5 562.0q1.5-3.5 3.5-2t4 1.2 3.5-2.2" fill="none" stroke="#1070f0" stroke-width="1.4"/>
<path d="M315.5 567.0l3.2-3.6 4.2 3 3.6-3.4" fill="none" stroke="#38344c" stroke-width="1.2"/>
</g>
<rect x="314" y="546" width="9" height="9" fill="#f0f0f0" fill-opacity=".75"/>
<path d="M315 550.6l2.6 3 4.6-6.4" fill="none" stroke="#707070" stroke-width="2"/>
<text x="301.5" y="567" font-size="10" fill="#f07850">q</text>
<text x="306.8" y="562.5" font-size="6" fill="#f07850">+</text>
<text x="208" y="560.3" font-size="12" fill="#603000">Al</text>
<text x="225" y="560.5" font-size="14" fill="#603000">2</text>
<text x="236" y="560.5" font-size="8.5" fill="#603000" textLength="24" lengthAdjust="spacing">mg/cm</text>
<text x="260.5" y="556.0" font-size="5.5" fill="#603000">2</text>
<rect x="24" y="314" width="303" height="1" fill="#9898a6"/>
<rect x="24" y="315" width="303" height="1" fill="#e6e6f2"/>
<rect x="24" y="360" width="303" height="1" fill="#9898a6"/>
<rect x="24" y="361" width="303" height="1" fill="#e6e6f2"/>
<rect x="24" y="393" width="303" height="1" fill="#9898a6"/>
<rect x="24" y="394" width="303" height="1" fill="#e6e6f2"/>
<rect x="24" y="439" width="303" height="1" fill="#9898a6"/>
<rect x="24" y="440" width="303" height="1" fill="#e6e6f2"/>
<rect x="24" y="472" width="303" height="1" fill="#9898a6"/>
<rect x="24" y="473" width="303" height="1" fill="#e6e6f2"/>
<rect x="24" y="505" width="303" height="1" fill="#9898a6"/>
<rect x="24" y="506" width="303" height="1" fill="#e6e6f2"/>
<rect x="24" y="538" width="303" height="1" fill="#9898a6"/>
<rect x="24" y="539" width="303" height="1" fill="#e6e6f2"/>
<rect x="23" y="282" width="320" height="1" fill="#c4c428"/>
<rect x="23" y="282" width="1" height="290" fill="#c4c428"/>
<rect x="23" y="571" width="305" height="1" fill="#c4c428"/>
<rect x="328" y="283" width="15" height="289" fill="#f0f0f0"/>
<rect x="328" y="283" width="1" height="289" fill="#e0e0e0"/>
<rect x="329" y="283" width="13" height="17" fill="#ffffff"/>
<rect x="329" y="555" width="13" height="17" fill="#ffffff"/>
<path d="M331 294l4.5-5 4.5 5z" fill="#505050"/>
<path d="M331 561l4.5 5 4.5-5z" fill="#505050"/>
<rect x="329" y="300" width="13" height="165" fill="#ffffff"/>
<rect x="329" y="465" width="13" height="90" fill="#e4e4e4"/>
<rect x="342" y="283" width="1" height="289" fill="#d8d020"/>
<rect x="23.5" y="573.5" width="319" height="215" fill="#dcd814" stroke="#a8a010" stroke-width="1"/>
<text x="27.6" y="585.8" font-size="12" fill="#d87050" textLength="31.5" lengthAdjust="spacing">config</text>
<text x="27.6" y="602" font-size="12" fill="#d87050" textLength="32" lengthAdjust="spacing">option</text>
<text x="26.5" y="618" font-size="12" fill="#d87050" textLength="39" lengthAdjust="spacing">version</text>
<text x="87.1" y="585.8" font-size="12" fill="#3838b8" textLength="70" lengthAdjust="spacing">A1900_2019</text>
<text x="87.1" y="602" font-size="12" fill="#3838b8" textLength="61" lengthAdjust="spacing">FRIB_2021</text>
<text x="87.1" y="618" font-size="12" fill="#3838b8" font-weight="bold" textLength="33.5" lengthAdjust="spacing">16.3.7</text>
<text x="300" y="585.8" font-size="12" fill="#d87050" textLength="23" lengthAdjust="spacing">total</text>
<text x="299" y="602" font-size="12" fill="#d87050" textLength="24" lengthAdjust="spacing">dp/p</text>
<text x="294.5" y="618" font-size="12" fill="#b82010" textLength="34" lengthAdjust="spacing">1.00%</text>
<circle cx="162.3" cy="670.6" r="17.2" fill="#6cb33f"/>
<circle cx="205.9" cy="711.3" r="16.4" fill="#7a7f4a"/>
<circle cx="197.9" cy="677.6" r="23.5" fill="#f5cf3d"/>
<circle cx="168.9" cy="703.5" r="23.5" fill="#0f5cc0"/>
<circle cx="157.0" cy="664.5" r="3.6" fill="#a8d490" stroke="#d4ecc8" stroke-width=".7"/>
<circle cx="164.0" cy="664.5" r="3.6" fill="#a8d490" stroke="#d4ecc8" stroke-width=".7"/>
<circle cx="157.0" cy="671.5" r="3.6" fill="#a8d490" stroke="#d4ecc8" stroke-width=".7"/>
<circle cx="164.0" cy="671.5" r="3.6" fill="#a8d490" stroke="#d4ecc8" stroke-width=".7"/>
<circle cx="160.5" cy="668" r="3.6" fill="#90c870" stroke="#d4ecc8" stroke-width=".7"/>
<g fill="#fdf3cc" transform="translate(196.5,657) scale(1.0)"><circle cx="0" cy="0" r="1.8"/><path d="M-3 2.5h6l.8 7h-1.6l-.4 8h-1.3l-.5-6-.5 6h-1.3l-.4-8h-1.6z"/></g>
<g fill="#fdf3cc" transform="translate(209.5,659) scale(0.95)"><circle cx="0" cy="0" r="1.8"/><path d="M-3 2.5h6l.8 7h-1.6l-.4 8h-1.3l-.5-6-.5 6h-1.3l-.4-8h-1.6z"/></g>
<g fill="#fdf3cc" transform="translate(203,671) scale(0.7)"><circle cx="0" cy="0" r="1.8"/><path d="M-3 2.5h6l.8 7h-1.6l-.4 8h-1.3l-.5-6-.5 6h-1.3l-.4-8h-1.6z"/></g>
<polygon points="156.0,702.7 156.3,706.2 159.5,707.4 156.3,708.8 156.1,712.2 153.8,709.6 150.5,710.5 152.3,707.5 150.4,704.6 153.8,705.4" fill="#a8c8f0"/>
<polygon points="160.9,687.4 161.2,689.6 163.2,690.5 161.2,691.3 161.0,693.5 159.6,691.9 157.4,692.4 158.6,690.5 157.4,688.7 159.5,689.1" fill="#90b8e8"/>
<polygon points="175.8,715.8 176.0,717.7 177.8,718.5 176.0,719.2 175.9,721.2 174.6,719.7 172.8,720.2 173.7,718.5 172.7,716.9 174.6,717.3" fill="#88b0e8"/>
<polygon points="162.7,720.3 162.8,721.9 164.3,722.5 162.8,723.1 162.7,724.7 161.7,723.5 160.2,723.9 161.0,722.5 160.1,721.2 161.7,721.5" fill="#6090d8"/>
<polygon points="179.7,709.1 179.9,710.8 181.5,711.5 179.9,712.1 179.8,713.9 178.7,712.6 177.0,713.0 177.9,711.5 177.0,710.1 178.6,710.4" fill="#88b0e8"/>
<polygon points="168.6,704.1 168.7,705.5 170.0,706.0 168.7,706.5 168.6,707.9 167.7,706.9 166.4,707.2 167.1,706.0 166.4,704.8 167.7,705.1" fill="#6090d8"/>
<ellipse cx="198" cy="712.5" rx="4.6" ry="6" fill="#c4c6a8"/><path d="M198 704.5v16" stroke="#7a7f4a" stroke-width="1"/><path d="M198 703v19" stroke="#c4c6a8" stroke-width=".5"/>
<ellipse cx="208.5" cy="712.5" rx="4.6" ry="6" fill="#c4c6a8"/><path d="M208.5 704.5v16" stroke="#7a7f4a" stroke-width="1"/><path d="M208.5 703v19" stroke="#c4c6a8" stroke-width=".5"/>
<circle cx="184" cy="689.9" r="21.2" fill="url(#sphere)"/>
<g transform="translate(176.8,683.4) rotate(45)"><rect x="-5" y="-5" width="5" height="5" fill="#6cb33f"/><rect x="0" y="-5" width="5" height="5" fill="#f5cf3d"/><rect x="-5" y="0" width="5" height="5" fill="#0f5cc0"/><rect x="0" y="0" width="5" height="5" fill="#7a7f4a"/></g>
<text x="151.2" y="753.2" font-size="27" fill="#1c1a18" font-weight="bold" textLength="66.8" lengthAdjust="spacing">FRIB</text>
<text x="87" y="784.6" font-size="13" fill="#3434d8" font-weight="bold" textLength="158" lengthAdjust="spacing">Projectile Fragmentation</text>
<text x="254.6" y="784.6" font-size="10" fill="#3434d8" textLength="23.5" lengthAdjust="spacing">(E2*)</text>
<clipPath id="chartclip"><rect x="349" y="106" width="992" height="667"/></clipPath>
<g clip-path="url(#chartclip)" shape-rendering="crispEdges">
<rect x="349" y="106" width="992" height="667" fill="#7b7b7b"/>
<rect x="335" y="65" width="68" height="68" fill="#5000e0"/>
<rect x="403" y="65" width="68" height="68" fill="#5000e0"/>
<rect x="471" y="65" width="68" height="68" fill="#5000e0"/>
<rect x="539" y="65" width="68" height="68" fill="#5000e0"/>
<rect x="607" y="65" width="68" height="68" fill="#5000e0"/>
<rect x="675" y="65" width="68" height="68" fill="#5000e0"/>
<rect x="743" y="65" width="68" height="68" fill="#5000e0"/>
<rect x="811" y="65" width="68" height="68" fill="#5000e0"/>
<rect x="879" y="65" width="68" height="68" fill="#5000e0"/>
<rect x="947" y="65" width="68" height="68" fill="#5000e0"/>
<rect x="1015" y="65" width="68" height="68" fill="#5000e0"/>
<rect x="1083" y="65" width="68" height="68" fill="#5000e0"/>
<rect x="1151" y="65" width="68" height="68" fill="#5000e0"/>
<rect x="1219" y="65" width="68" height="68" fill="#5000e0"/>
<rect x="1287" y="65" width="68" height="68" fill="#4210e6"/>
<rect x="335" y="133" width="68" height="68" fill="#5000e0"/>
<rect x="403" y="133" width="68" height="68" fill="#c0c0c0"/>
<rect x="471" y="133" width="68" height="68" fill="#5000e0"/>
<rect x="539" y="133" width="68" height="68" fill="#c0c0c0"/>
<rect x="607" y="133" width="68" height="68" fill="#c0c0c0"/>
<rect x="675" y="133" width="68" height="68" fill="#c0c0c0"/>
<rect x="743" y="133" width="68" height="68" fill="#5000e0"/>
<rect x="811" y="133" width="68" height="68" fill="#c0c0c0"/>
<rect x="879" y="133" width="68" height="68" fill="#5000e0"/>
<rect x="947" y="133" width="68" height="68" fill="#c0c0c0"/>
<rect x="948" y="134" width="67" height="24" fill="#ffff00"/>
<rect x="1015" y="133" width="68" height="68" fill="#5000e0"/>
<rect x="1083" y="133" width="68" height="68" fill="#5000e0"/>
<rect x="1151" y="133" width="68" height="68" fill="#5000e0"/>
<rect x="1219" y="133" width="68" height="68" fill="#5000e0"/>
<rect x="1287" y="133" width="68" height="68" fill="#4210e6"/>
<rect x="335" y="201" width="68" height="68" fill="#5000e0"/>
<rect x="403" y="201" width="68" height="68" fill="#5000e0"/>
<rect x="471" y="201" width="68" height="68" fill="#5000e0"/>
<rect x="539" y="201" width="68" height="68" fill="#5000e0"/>
<rect x="607" y="201" width="68" height="68" fill="#5000e0"/>
<rect x="675" y="201" width="68" height="68" fill="#5000e0"/>
<rect x="743" y="201" width="68" height="68" fill="#5000e0"/>
<rect x="811" y="201" width="68" height="68" fill="#5000e0"/>
<rect x="879" y="201" width="68" height="68" fill="#5000e0"/>
<rect x="947" y="201" width="68" height="68" fill="#5000e0"/>
<rect x="1015" y="201" width="68" height="68" fill="#4210e6"/>
<rect x="1083" y="201" width="68" height="68" fill="#4210e6"/>
<rect x="1151" y="201" width="68" height="68" fill="#4210e6"/>
<rect x="1219" y="201" width="68" height="68" fill="#4210e6"/>
<rect x="1287" y="201" width="68" height="68" fill="#4210e6"/>
<rect x="335" y="269" width="68" height="68" fill="#e83020"/>
<rect x="403" y="269" width="68" height="68" fill="#c0c0c0"/>
<rect x="471" y="269" width="68" height="68" fill="#5000e0"/>
<rect x="539" y="269" width="68" height="68" fill="#c0c0c0"/>
<rect x="607" y="269" width="68" height="68" fill="#5000e0"/>
<rect x="675" y="269" width="68" height="68" fill="#5000e0"/>
<rect x="743" y="269" width="68" height="68" fill="#5000e0"/>
<rect x="811" y="269" width="68" height="68" fill="#5000e0"/>
<rect x="879" y="269" width="68" height="68" fill="#5000e0"/>
<rect x="947" y="269" width="68" height="68" fill="#5000e0"/>
<rect x="1015" y="269" width="68" height="68" fill="#5000e0"/>
<rect x="1083" y="269" width="68" height="68" fill="#4210e6"/>
<rect x="1151" y="269" width="68" height="68" fill="#4210e6"/>
<rect x="1219" y="269" width="68" height="68" fill="#4210e6"/>
<rect x="1287" y="269" width="68" height="68" fill="#5000e0"/>
<rect x="335" y="337" width="68" height="68" fill="#90ffe8"/>
<rect x="403" y="337" width="68" height="68" fill="#c0c0c0"/>
<rect x="471" y="337" width="68" height="68" fill="#5000e0"/>
<rect x="539" y="337" width="68" height="68" fill="#5000e0"/>
<rect x="607" y="337" width="68" height="68" fill="#5000e0"/>
<rect x="675" y="337" width="68" height="68" fill="#5000e0"/>
<rect x="743" y="337" width="68" height="68" fill="#5000e0"/>
<rect x="811" y="337" width="68" height="68" fill="#5000e0"/>
<rect x="879" y="337" width="68" height="68" fill="#5000e0"/>
<rect x="947" y="337" width="68" height="68" fill="#4210e6"/>
<rect x="1015" y="337" width="68" height="68" fill="#4210e6"/>
<rect x="1083" y="337" width="68" height="68" fill="#5000e0"/>
<rect x="1151" y="337" width="68" height="68" fill="#5000e0"/>
<rect x="1219" y="337" width="68" height="68" fill="#5000e0"/>
<rect x="1287" y="337" width="68" height="68" fill="#5000e0"/>
<rect x="335" y="405" width="68" height="68" fill="#5000e0"/>
<rect x="403" y="405" width="68" height="68" fill="#c0c0c0"/>
<rect x="471" y="405" width="68" height="68" fill="#5000e0"/>
<rect x="539" y="405" width="68" height="68" fill="#5000e0"/>
<rect x="607" y="405" width="68" height="68" fill="#5000e0"/>
<rect x="675" y="405" width="68" height="68" fill="#5000e0"/>
<rect x="743" y="405" width="68" height="68" fill="#5000e0"/>
<rect x="811" y="405" width="68" height="68" fill="#5000e0"/>
<rect x="812" y="406" width="67" height="25" fill="#ffffff"/>
<rect x="879" y="405" width="68" height="68" fill="#4210e6"/>
<rect x="947" y="405" width="68" height="68" fill="#4210e6"/>
<rect x="1015" y="405" width="68" height="68" fill="#4210e6"/>
<rect x="1083" y="405" width="68" height="68" fill="#5000e0"/>
<rect x="1151" y="405" width="68" height="68" fill="#5000e0"/>
<rect x="1219" y="405" width="68" height="68" fill="#5000e0"/>
<rect x="1287" y="405" width="68" height="68" fill="#5000e0"/>
<rect x="335" y="473" width="68" height="68" fill="#5000e0"/>
<rect x="403" y="473" width="68" height="68" fill="#5000e0"/>
<rect x="471" y="473" width="68" height="68" fill="#5000e0"/>
<rect x="539" y="473" width="68" height="68" fill="#5000e0"/>
<rect x="607" y="473" width="68" height="68" fill="#4210e6"/>
<rect x="675" y="473" width="68" height="68" fill="#4210e6"/>
<rect x="743" y="473" width="68" height="68" fill="#4210e6"/>
<rect x="811" y="473" width="68" height="68" fill="#4210e6"/>
<rect x="879" y="473" width="68" height="68" fill="#4210e6"/>
<rect x="947" y="473" width="68" height="68" fill="#4210e6"/>
<rect x="1015" y="473" width="68" height="68" fill="#5000e0"/>
<rect x="1083" y="473" width="68" height="68" fill="#5000e0"/>
<rect x="1151" y="473" width="68" height="68" fill="#5000e0"/>
<rect x="1219" y="473" width="68" height="68" fill="#5000e0"/>
<rect x="1287" y="473" width="68" height="68" fill="#838383"/>
<rect x="335" y="541" width="68" height="68" fill="#5000e0"/>
<rect x="403" y="541" width="68" height="68" fill="#5000e0"/>
<rect x="471" y="541" width="68" height="68" fill="#5000e0"/>
<rect x="539" y="541" width="68" height="68" fill="#4210e6"/>
<rect x="607" y="541" width="68" height="68" fill="#4210e6"/>
<rect x="675" y="541" width="68" height="68" fill="#4210e6"/>
<rect x="743" y="541" width="68" height="68" fill="#4210e6"/>
<rect x="811" y="541" width="68" height="68" fill="#4210e6"/>
<rect x="879" y="541" width="68" height="68" fill="#4210e6"/>
<rect x="947" y="541" width="68" height="68" fill="#5000e0"/>
<rect x="1015" y="541" width="68" height="68" fill="#5000e0"/>
<rect x="1083" y="541" width="68" height="68" fill="#5000e0"/>
<rect x="1151" y="541" width="68" height="68" fill="#5000e0"/>
<rect x="1219" y="541" width="68" height="68" fill="#838383"/>
<rect x="335" y="609" width="68" height="68" fill="#4210e6"/>
<rect x="403" y="609" width="68" height="68" fill="#4210e6"/>
<rect x="471" y="609" width="68" height="68" fill="#4210e6"/>
<rect x="539" y="609" width="68" height="68" fill="#4210e6"/>
<rect x="607" y="609" width="68" height="68" fill="#5000e0"/>
<rect x="675" y="609" width="68" height="68" fill="#4210e6"/>
<rect x="743" y="609" width="68" height="68" fill="#4210e6"/>
<rect x="811" y="609" width="68" height="68" fill="#4210e6"/>
<rect x="879" y="609" width="68" height="68" fill="#5000e0"/>
<rect x="947" y="609" width="68" height="68" fill="#5000e0"/>
<rect x="1015" y="609" width="68" height="68" fill="#5000e0"/>
<rect x="1083" y="609" width="68" height="68" fill="#5000e0"/>
<rect x="1219" y="609" width="68" height="68" fill="#838383"/>
<rect x="335" y="677" width="68" height="68" fill="#4210e6"/>
<rect x="403" y="677" width="68" height="68" fill="#4210e6"/>
<rect x="471" y="677" width="68" height="68" fill="#4210e6"/>
<rect x="539" y="677" width="68" height="68" fill="#4210e6"/>
<rect x="607" y="677" width="68" height="68" fill="#4210e6"/>
<rect x="675" y="677" width="68" height="68" fill="#4210e6"/>
<rect x="743" y="677" width="68" height="68" fill="#5000e0"/>
<rect x="811" y="677" width="68" height="68" fill="#5000e0"/>
<rect x="947" y="677" width="68" height="68" fill="#5000e0"/>
<rect x="335" y="745" width="68" height="68" fill="#4210e6"/>
<rect x="403" y="745" width="68" height="68" fill="#4210e6"/>
<rect x="471" y="745" width="68" height="68" fill="#4210e6"/>
<rect x="539" y="745" width="68" height="68" fill="#4210e6"/>
<rect x="607" y="745" width="68" height="68" fill="#4210e6"/>
<rect x="675" y="745" width="68" height="68" fill="#5000e0"/>
<rect x="811" y="745" width="68" height="68" fill="#5000e0"/>
<rect x="947" y="745" width="68" height="68" fill="#5000e0"/>
<rect x="335.5" y="65.5" width="68" height="68" fill="none" stroke="#10b418"/>
<rect x="403.5" y="65.5" width="68" height="68" fill="none" stroke="#10b418"/>
<rect x="471.5" y="65.5" width="68" height="68" fill="none" stroke="#10b418"/>
<rect x="539.5" y="65.5" width="68" height="68" fill="none" stroke="#10b418"/>
<rect x="607.5" y="65.5" width="68" height="68" fill="none" stroke="#10b418"/>
<rect x="675.5" y="65.5" width="68" height="68" fill="none" stroke="#10b418"/>
<rect x="743.5" y="65.5" width="68" height="68" fill="none" stroke="#10b418"/>
<rect x="811.5" y="65.5" width="68" height="68" fill="none" stroke="#10b418"/>
<rect x="879.5" y="65.5" width="68" height="68" fill="none" stroke="#10b418"/>
<rect x="947.5" y="65.5" width="68" height="68" fill="none" stroke="#10b418"/>
<rect x="1015.5" y="65.5" width="68" height="68" fill="none" stroke="#10b418"/>
<rect x="1083.5" y="65.5" width="68" height="68" fill="none" stroke="#10b418"/>
<rect x="1151.5" y="65.5" width="68" height="68" fill="none" stroke="#10b418"/>
<rect x="1219.5" y="65.5" width="68" height="68" fill="none" stroke="#10b418"/>
<rect x="1287.5" y="65.5" width="68" height="68" fill="none" stroke="#10b418"/>
<rect x="335.5" y="133.5" width="68" height="68" fill="none" stroke="#10b418"/>
<rect x="403.5" y="133.5" width="68" height="68" fill="none" stroke="#10b418"/>
<rect x="471.5" y="133.5" width="68" height="68" fill="none" stroke="#10b418"/>
<rect x="539.5" y="133.5" width="68" height="68" fill="none" stroke="#10b418"/>
<rect x="607.5" y="133.5" width="68" height="68" fill="none" stroke="#10b418"/>
<rect x="675.5" y="133.5" width="68" height="68" fill="none" stroke="#10b418"/>
<rect x="743.5" y="133.5" width="68" height="68" fill="none" stroke="#10b418"/>
<rect x="811.5" y="133.5" width="68" height="68" fill="none" stroke="#10b418"/>
<rect x="879.5" y="133.5" width="68" height="68" fill="none" stroke="#10b418"/>
<rect x="947.5" y="133.5" width="68" height="68" fill="none" stroke="#10b418"/>
<rect x="1015.5" y="133.5" width="68" height="68" fill="none" stroke="#10b418"/>
<rect x="1083.5" y="133.5" width="68" height="68" fill="none" stroke="#10b418"/>
<rect x="1151.5" y="133.5" width="68" height="68" fill="none" stroke="#10b418"/>
<rect x="1219.5" y="133.5" width="68" height="68" fill="none" stroke="#10b418"/>
<rect x="1287.5" y="133.5" width="68" height="68" fill="none" stroke="#10b418"/>
<rect x="335.5" y="201.5" width="68" height="68" fill="none" stroke="#10b418"/>
<rect x="403.5" y="201.5" width="68" height="68" fill="none" stroke="#10b418"/>
<rect x="471.5" y="201.5" width="68" height="68" fill="none" stroke="#10b418"/>
<rect x="539.5" y="201.5" width="68" height="68" fill="none" stroke="#10b418"/>
<rect x="607.5" y="201.5" width="68" height="68" fill="none" stroke="#10b418"/>
<rect x="675.5" y="201.5" width="68" height="68" fill="none" stroke="#10b418"/>
<rect x="743.5" y="201.5" width="68" height="68" fill="none" stroke="#10b418"/>
<rect x="811.5" y="201.5" width="68" height="68" fill="none" stroke="#10b418"/>
<rect x="879.5" y="201.5" width="68" height="68" fill="none" stroke="#10b418"/>
<rect x="947.5" y="201.5" width="68" height="68" fill="none" stroke="#10b418"/>
<rect x="1015.5" y="201.5" width="68" height="68" fill="none" stroke="#10b418"/>
<rect x="1083.5" y="201.5" width="68" height="68" fill="none" stroke="#10b418"/>
<rect x="1151.5" y="201.5" width="68" height="68" fill="none" stroke="#10b418"/>
<rect x="1219.5" y="201.5" width="68" height="68" fill="none" stroke="#10b418"/>
<rect x="1287.5" y="201.5" width="68" height="68" fill="none" stroke="#10b418"/>
<rect x="335.5" y="269.5" width="68" height="68" fill="none" stroke="#10b418"/>
<rect x="403.5" y="269.5" width="68" height="68" fill="none" stroke="#10b418"/>
<rect x="471.5" y="269.5" width="68" height="68" fill="none" stroke="#10b418"/>
<rect x="539.5" y="269.5" width="68" height="68" fill="none" stroke="#10b418"/>
<rect x="607.5" y="269.5" width="68" height="68" fill="none" stroke="#10b418"/>
<rect x="675.5" y="269.5" width="68" height="68" fill="none" stroke="#10b418"/>
<rect x="743.5" y="269.5" width="68" height="68" fill="none" stroke="#10b418"/>
<rect x="811.5" y="269.5" width="68" height="68" fill="none" stroke="#10b418"/>
<rect x="879.5" y="269.5" width="68" height="68" fill="none" stroke="#10b418"/>
<rect x="947.5" y="269.5" width="68" height="68" fill="none" stroke="#10b418"/>
<rect x="1015.5" y="269.5" width="68" height="68" fill="none" stroke="#10b418"/>
<rect x="1083.5" y="269.5" width="68" height="68" fill="none" stroke="#10b418"/>
<rect x="1151.5" y="269.5" width="68" height="68" fill="none" stroke="#10b418"/>
<rect x="1219.5" y="269.5" width="68" height="68" fill="none" stroke="#10b418"/>
<rect x="1287.5" y="269.5" width="68" height="68" fill="none" stroke="#10b418"/>
<rect x="335.5" y="337.5" width="68" height="68" fill="none" stroke="#10b418"/>
<rect x="403.5" y="337.5" width="68" height="68" fill="none" stroke="#10b418"/>
<rect x="471.5" y="337.5" width="68" height="68" fill="none" stroke="#10b418"/>
<rect x="539.5" y="337.5" width="68" height="68" fill="none" stroke="#10b418"/>
<rect x="607.5" y="337.5" width="68" height="68" fill="none" stroke="#10b418"/>
<rect x="675.5" y="337.5" width="68" height="68" fill="none" stroke="#10b418"/>
<rect x="743.5" y="337.5" width="68" height="68" fill="none" stroke="#10b418"/>
<rect x="811.5" y="337.5" width="68" height="68" fill="none" stroke="#10b418"/>
<rect x="879.5" y="337.5" width="68" height="68" fill="none" stroke="#10b418"/>
<rect x="947.5" y="337.5" width="68" height="68" fill="none" stroke="#10b418"/>
<rect x="1015.5" y="337.5" width="68" height="68" fill="none" stroke="#10b418"/>
<rect x="1083.5" y="337.5" width="68" height="68" fill="none" stroke="#10b418"/>
<rect x="1151.5" y="337.5" width="68" height="68" fill="none" stroke="#10b418"/>
<rect x="1219.5" y="337.5" width="68" height="68" fill="none" stroke="#10b418"/>
<rect x="1287.5" y="337.5" width="68" height="68" fill="none" stroke="#10b418"/>
<rect x="335.5" y="405.5" width="68" height="68" fill="none" stroke="#10b418"/>
<rect x="403.5" y="405.5" width="68" height="68" fill="none" stroke="#10b418"/>
<rect x="471.5" y="405.5" width="68" height="68" fill="none" stroke="#10b418"/>
<rect x="539.5" y="405.5" width="68" height="68" fill="none" stroke="#10b418"/>
<rect x="607.5" y="405.5" width="68" height="68" fill="none" stroke="#10b418"/>
<rect x="675.5" y="405.5" width="68" height="68" fill="none" stroke="#10b418"/>
<rect x="743.5" y="405.5" width="68" height="68" fill="none" stroke="#10b418"/>
<rect x="811.5" y="405.5" width="68" height="68" fill="none" stroke="#10b418"/>
<rect x="879.5" y="405.5" width="68" height="68" fill="none" stroke="#10b418"/>
<rect x="947.5" y="405.5" width="68" height="68" fill="none" stroke="#10b418"/>
<rect x="1015.5" y="405.5" width="68" height="68" fill="none" stroke="#10b418"/>
<rect x="1083.5" y="405.5" width="68" height="68" fill="none" stroke="#10b418"/>
<rect x="1151.5" y="405.5" width="68" height="68" fill="none" stroke="#10b418"/>
<rect x="1219.5" y="405.5" width="68" height="68" fill="none" stroke="#10b418"/>
<rect x="1287.5" y="405.5" width="68" height="68" fill="none" stroke="#10b418"/>
<rect x="335.5" y="473.5" width="68" height="68" fill="none" stroke="#10b418"/>
<rect x="403.5" y="473.5" width="68" height="68" fill="none" stroke="#10b418"/>
<rect x="471.5" y="473.5" width="68" height="68" fill="none" stroke="#10b418"/>
<rect x="539.5" y="473.5" width="68" height="68" fill="none" stroke="#10b418"/>
<rect x="607.5" y="473.5" width="68" height="68" fill="none" stroke="#10b418"/>
<rect x="675.5" y="473.5" width="68" height="68" fill="none" stroke="#10b418"/>
<rect x="743.5" y="473.5" width="68" height="68" fill="none" stroke="#10b418"/>
<rect x="811.5" y="473.5" width="68" height="68" fill="none" stroke="#10b418"/>
<rect x="879.5" y="473.5" width="68" height="68" fill="none" stroke="#10b418"/>
<rect x="947.5" y="473.5" width="68" height="68" fill="none" stroke="#10b418"/>
<rect x="1015.5" y="473.5" width="68" height="68" fill="none" stroke="#10b418"/>
<rect x="1083.5" y="473.5" width="68" height="68" fill="none" stroke="#10b418"/>
<rect x="1151.5" y="473.5" width="68" height="68" fill="none" stroke="#10b418"/>
<rect x="1219.5" y="473.5" width="68" height="68" fill="none" stroke="#10b418"/>
<rect x="1287.5" y="473.5" width="68" height="68" fill="none" stroke="#10b418"/>
<rect x="335.5" y="541.5" width="68" height="68" fill="none" stroke="#10b418"/>
<rect x="403.5" y="541.5" width="68" height="68" fill="none" stroke="#10b418"/>
<rect x="471.5" y="541.5" width="68" height="68" fill="none" stroke="#10b418"/>
<rect x="539.5" y="541.5" width="68" height="68" fill="none" stroke="#10b418"/>
<rect x="607.5" y="541.5" width="68" height="68" fill="none" stroke="#10b418"/>
<rect x="675.5" y="541.5" width="68" height="68" fill="none" stroke="#10b418"/>
<rect x="743.5" y="541.5" width="68" height="68" fill="none" stroke="#10b418"/>
<rect x="811.5" y="541.5" width="68" height="68" fill="none" stroke="#10b418"/>
<rect x="879.5" y="541.5" width="68" height="68" fill="none" stroke="#10b418"/>
<rect x="947.5" y="541.5" width="68" height="68" fill="none" stroke="#10b418"/>
<rect x="1015.5" y="541.5" width="68" height="68" fill="none" stroke="#10b418"/>
<rect x="1083.5" y="541.5" width="68" height="68" fill="none" stroke="#10b418"/>
<rect x="1151.5" y="541.5" width="68" height="68" fill="none" stroke="#10b418"/>
<rect x="1219.5" y="541.5" width="68" height="68" fill="none" stroke="#10b418"/>
<rect x="335.5" y="609.5" width="68" height="68" fill="none" stroke="#10b418"/>
<rect x="403.5" y="609.5" width="68" height="68" fill="none" stroke="#10b418"/>
<rect x="471.5" y="609.5" width="68" height="68" fill="none" stroke="#10b418"/>
<rect x="539.5" y="609.5" width="68" height="68" fill="none" stroke="#10b418"/>
<rect x="607.5" y="609.5" width="68" height="68" fill="none" stroke="#10b418"/>
<rect x="675.5" y="609.5" width="68" height="68" fill="none" stroke="#10b418"/>
<rect x="743.5" y="609.5" width="68" height="68" fill="none" stroke="#10b418"/>
<rect x="811.5" y="609.5" width="68" height="68" fill="none" stroke="#10b418"/>
<rect x="879.5" y="609.5" width="68" height="68" fill="none" stroke="#10b418"/>
<rect x="947.5" y="609.5" width="68" height="68" fill="none" stroke="#10b418"/>
<rect x="1015.5" y="609.5" width="68" height="68" fill="none" stroke="#10b418"/>
<rect x="1083.5" y="609.5" width="68" height="68" fill="none" stroke="#10b418"/>
<rect x="1219.5" y="609.5" width="68" height="68" fill="none" stroke="#10b418"/>
<rect x="335.5" y="677.5" width="68" height="68" fill="none" stroke="#10b418"/>
<rect x="403.5" y="677.5" width="68" height="68" fill="none" stroke="#10b418"/>
<rect x="471.5" y="677.5" width="68" height="68" fill="none" stroke="#10b418"/>
<rect x="539.5" y="677.5" width="68" height="68" fill="none" stroke="#10b418"/>
<rect x="607.5" y="677.5" width="68" height="68" fill="none" stroke="#10b418"/>
<rect x="675.5" y="677.5" width="68" height="68" fill="none" stroke="#10b418"/>
<rect x="743.5" y="677.5" width="68" height="68" fill="none" stroke="#10b418"/>
<rect x="811.5" y="677.5" width="68" height="68" fill="none" stroke="#10b418"/>
<rect x="947.5" y="677.5" width="68" height="68" fill="none" stroke="#10b418"/>
<rect x="335.5" y="745.5" width="68" height="68" fill="none" stroke="#10b418"/>
<rect x="403.5" y="745.5" width="68" height="68" fill="none" stroke="#10b418"/>
<rect x="471.5" y="745.5" width="68" height="68" fill="none" stroke="#10b418"/>
<rect x="539.5" y="745.5" width="68" height="68" fill="none" stroke="#10b418"/>
<rect x="607.5" y="745.5" width="68" height="68" fill="none" stroke="#10b418"/>
<rect x="675.5" y="745.5" width="68" height="68" fill="none" stroke="#10b418"/>
<rect x="811.5" y="745.5" width="68" height="68" fill="none" stroke="#10b418"/>
<rect x="947.5" y="745.5" width="68" height="68" fill="none" stroke="#10b418"/>
</g>
<g clip-path="url(#chartclip)">
<text x="345.9" y="147" font-size="13.5" fill="#ffffff" textLength="15.0" lengthAdjust="spacing">39</text>
<text x="364.7" y="154.6" font-size="20" fill="#ffffff" textLength="24.5" lengthAdjust="spacing">Ca</text>
<text x="413.9" y="147" font-size="13.5" fill="#000" textLength="15.0" lengthAdjust="spacing">40</text>
<text x="432.7" y="154.6" font-size="20" fill="#000" textLength="24.5" lengthAdjust="spacing">Ca</text>
<text x="481.9" y="147" font-size="13.5" fill="#ffffff" textLength="15.0" lengthAdjust="spacing">41</text>
<text x="500.7" y="154.6" font-size="20" fill="#ffffff" textLength="24.5" lengthAdjust="spacing">Ca</text>
<text x="549.9" y="147" font-size="13.5" fill="#000" textLength="15.0" lengthAdjust="spacing">42</text>
<text x="568.6" y="154.6" font-size="20" fill="#000" textLength="24.5" lengthAdjust="spacing">Ca</text>
<text x="617.9" y="147" font-size="13.5" fill="#000" textLength="15.0" lengthAdjust="spacing">43</text>
<text x="636.6" y="154.6" font-size="20" fill="#000" textLength="24.5" lengthAdjust="spacing">Ca</text>
<text x="685.9" y="147" font-size="13.5" fill="#000" textLength="15.0" lengthAdjust="spacing">44</text>
<text x="704.6" y="154.6" font-size="20" fill="#000" textLength="24.5" lengthAdjust="spacing">Ca</text>
<text x="753.9" y="147" font-size="13.5" fill="#ffffff" textLength="15.0" lengthAdjust="spacing">45</text>
<text x="772.6" y="154.6" font-size="20" fill="#ffffff" textLength="24.5" lengthAdjust="spacing">Ca</text>
<text x="821.9" y="147" font-size="13.5" fill="#000" textLength="15.0" lengthAdjust="spacing">46</text>
<text x="840.6" y="154.6" font-size="20" fill="#000" textLength="24.5" lengthAdjust="spacing">Ca</text>
<text x="889.9" y="147" font-size="13.5" fill="#ffffff" textLength="15.0" lengthAdjust="spacing">47</text>
<text x="908.6" y="154.6" font-size="20" fill="#ffffff" textLength="24.5" lengthAdjust="spacing">Ca</text>
<text x="957.9" y="147" font-size="13.5" fill="#000" textLength="15.0" lengthAdjust="spacing">48</text>
<text x="976.6" y="154.6" font-size="20" fill="#000" textLength="24.5" lengthAdjust="spacing">Ca</text>
<text x="1025.8" y="147" font-size="13.5" fill="#ffffff" textLength="15.0" lengthAdjust="spacing">49</text>
<text x="1044.6" y="154.6" font-size="20" fill="#ffffff" textLength="24.5" lengthAdjust="spacing">Ca</text>
<text x="1093.8" y="147" font-size="13.5" fill="#ffffff" textLength="15.0" lengthAdjust="spacing">50</text>
<text x="1112.6" y="154.6" font-size="20" fill="#ffffff" textLength="24.5" lengthAdjust="spacing">Ca</text>
<text x="1161.8" y="147" font-size="13.5" fill="#ffffff" textLength="15.0" lengthAdjust="spacing">51</text>
<text x="1180.6" y="154.6" font-size="20" fill="#ffffff" textLength="24.5" lengthAdjust="spacing">Ca</text>
<text x="1229.8" y="147" font-size="13.5" fill="#ffffff" textLength="15.0" lengthAdjust="spacing">52</text>
<text x="1248.6" y="154.6" font-size="20" fill="#ffffff" textLength="24.5" lengthAdjust="spacing">Ca</text>
<text x="1297.8" y="147" font-size="13.5" fill="#f4ea50" textLength="15.0" lengthAdjust="spacing">53</text>
<text x="1316.6" y="154.6" font-size="20" fill="#f4ea50" textLength="24.5" lengthAdjust="spacing">Ca</text>
<text x="351.4" y="215" font-size="13.5" fill="#ffffff" textLength="15.0" lengthAdjust="spacing">38</text>
<text x="370.2" y="222.6" font-size="20" fill="#ffffff" textLength="13.5" lengthAdjust="spacing">K</text>
<text x="419.4" y="215" font-size="13.5" fill="#ffffff" textLength="15.0" lengthAdjust="spacing">39</text>
<text x="438.2" y="222.6" font-size="20" fill="#ffffff" textLength="13.5" lengthAdjust="spacing">K</text>
<text x="487.4" y="215" font-size="13.5" fill="#ffffff" textLength="15.0" lengthAdjust="spacing">40</text>
<text x="506.2" y="222.6" font-size="20" fill="#ffffff" textLength="13.5" lengthAdjust="spacing">K</text>
<text x="555.4" y="215" font-size="13.5" fill="#ffffff" textLength="15.0" lengthAdjust="spacing">41</text>
<text x="574.1" y="222.6" font-size="20" fill="#ffffff" textLength="13.5" lengthAdjust="spacing">K</text>
<text x="623.4" y="215" font-size="13.5" fill="#ffffff" textLength="15.0" lengthAdjust="spacing">42</text>
<text x="642.1" y="222.6" font-size="20" fill="#ffffff" textLength="13.5" lengthAdjust="spacing">K</text>
<text x="691.4" y="215" font-size="13.5" fill="#ffffff" textLength="15.0" lengthAdjust="spacing">43</text>
<text x="710.1" y="222.6" font-size="20" fill="#ffffff" textLength="13.5" lengthAdjust="spacing">K</text>
<text x="759.4" y="215" font-size="13.5" fill="#ffffff" textLength="15.0" lengthAdjust="spacing">44</text>
<text x="778.1" y="222.6" font-size="20" fill="#ffffff" textLength="13.5" lengthAdjust="spacing">K</text>
<text x="827.4" y="215" font-size="13.5" fill="#ffffff" textLength="15.0" lengthAdjust="spacing">45</text>
<text x="846.1" y="222.6" font-size="20" fill="#ffffff" textLength="13.5" lengthAdjust="spacing">K</text>
<text x="895.4" y="215" font-size="13.5" fill="#ffffff" textLength="15.0" lengthAdjust="spacing">46</text>
<text x="914.1" y="222.6" font-size="20" fill="#ffffff" textLength="13.5" lengthAdjust="spacing">K</text>
<text x="963.4" y="215" font-size="13.5" fill="#ffffff" textLength="15.0" lengthAdjust="spacing">47</text>
<text x="982.1" y="222.6" font-size="20" fill="#ffffff" textLength="13.5" lengthAdjust="spacing">K</text>
<text x="1031.3" y="215" font-size="13.5" fill="#f4ea50" textLength="15.0" lengthAdjust="spacing">48</text>
<text x="1050.1" y="222.6" font-size="20" fill="#f4ea50" textLength="13.5" lengthAdjust="spacing">K</text>
<text x="1099.3" y="215" font-size="13.5" fill="#f4ea50" textLength="15.0" lengthAdjust="spacing">49</text>
<text x="1118.1" y="222.6" font-size="20" fill="#f4ea50" textLength="13.5" lengthAdjust="spacing">K</text>
<text x="1167.3" y="215" font-size="13.5" fill="#f4ea50" textLength="15.0" lengthAdjust="spacing">50</text>
<text x="1186.1" y="222.6" font-size="20" fill="#f4ea50" textLength="13.5" lengthAdjust="spacing">K</text>
<text x="1235.3" y="215" font-size="13.5" fill="#f4ea50" textLength="15.0" lengthAdjust="spacing">51</text>
<text x="1254.1" y="222.6" font-size="20" fill="#f4ea50" textLength="13.5" lengthAdjust="spacing">K</text>
<text x="1303.3" y="215" font-size="13.5" fill="#f4ea50" textLength="15.0" lengthAdjust="spacing">52</text>
<text x="1322.1" y="222.6" font-size="20" fill="#f4ea50" textLength="13.5" lengthAdjust="spacing">K</text>
<text x="348.1" y="283" font-size="13.5" fill="#ffffff" textLength="15.0" lengthAdjust="spacing">37</text>
<text x="366.9" y="290.6" font-size="20" fill="#ffffff" textLength="20" lengthAdjust="spacing">Ar</text>
<text x="416.1" y="283" font-size="13.5" fill="#000" textLength="15.0" lengthAdjust="spacing">38</text>
<text x="434.9" y="290.6" font-size="20" fill="#000" textLength="20" lengthAdjust="spacing">Ar</text>
<text x="484.1" y="283" font-size="13.5" fill="#ffffff" textLength="15.0" lengthAdjust="spacing">39</text>
<text x="502.9" y="290.6" font-size="20" fill="#ffffff" textLength="20" lengthAdjust="spacing">Ar</text>
<text x="552.1" y="283" font-size="13.5" fill="#000" textLength="15.0" lengthAdjust="spacing">40</text>
<text x="570.9" y="290.6" font-size="20" fill="#000" textLength="20" lengthAdjust="spacing">Ar</text>
<text x="620.1" y="283" font-size="13.5" fill="#ffffff" textLength="15.0" lengthAdjust="spacing">41</text>
<text x="638.9" y="290.6" font-size="20" fill="#ffffff" textLength="20" lengthAdjust="spacing">Ar</text>
<text x="688.1" y="283" font-size="13.5" fill="#ffffff" textLength="15.0" lengthAdjust="spacing">42</text>
<text x="706.9" y="290.6" font-size="20" fill="#ffffff" textLength="20" lengthAdjust="spacing">Ar</text>
<text x="756.1" y="283" font-size="13.5" fill="#ffffff" textLength="15.0" lengthAdjust="spacing">43</text>
<text x="774.9" y="290.6" font-size="20" fill="#ffffff" textLength="20" lengthAdjust="spacing">Ar</text>
<text x="824.1" y="283" font-size="13.5" fill="#ffffff" textLength="15.0" lengthAdjust="spacing">44</text>
<text x="842.9" y="290.6" font-size="20" fill="#ffffff" textLength="20" lengthAdjust="spacing">Ar</text>
<text x="892.1" y="283" font-size="13.5" fill="#ffffff" textLength="15.0" lengthAdjust="spacing">45</text>
<text x="910.9" y="290.6" font-size="20" fill="#ffffff" textLength="20" lengthAdjust="spacing">Ar</text>
<text x="960.1" y="283" font-size="13.5" fill="#ffffff" textLength="15.0" lengthAdjust="spacing">46</text>
<text x="978.9" y="290.6" font-size="20" fill="#ffffff" textLength="20" lengthAdjust="spacing">Ar</text>
<text x="1028.1" y="283" font-size="13.5" fill="#ffffff" textLength="15.0" lengthAdjust="spacing">47</text>
<text x="1046.9" y="290.6" font-size="20" fill="#ffffff" textLength="20" lengthAdjust="spacing">Ar</text>
<text x="1096.1" y="283" font-size="13.5" fill="#f4ea50" textLength="15.0" lengthAdjust="spacing">48</text>
<text x="1114.9" y="290.6" font-size="20" fill="#f4ea50" textLength="20" lengthAdjust="spacing">Ar</text>
<text x="1164.1" y="283" font-size="13.5" fill="#f4ea50" textLength="15.0" lengthAdjust="spacing">49</text>
<text x="1182.9" y="290.6" font-size="20" fill="#f4ea50" textLength="20" lengthAdjust="spacing">Ar</text>
<text x="1232.1" y="283" font-size="13.5" fill="#f4ea50" textLength="15.0" lengthAdjust="spacing">50</text>
<text x="1250.9" y="290.6" font-size="20" fill="#f4ea50" textLength="20" lengthAdjust="spacing">Ar</text>
<text x="1300.1" y="283" font-size="13.5" fill="#ffffff" textLength="15.0" lengthAdjust="spacing">51</text>
<text x="1318.9" y="290.6" font-size="20" fill="#ffffff" textLength="20" lengthAdjust="spacing">Ar</text>
<text x="348.9" y="351" font-size="13.5" fill="#000" textLength="15.0" lengthAdjust="spacing">36</text>
<text x="367.7" y="358.6" font-size="20" fill="#000" textLength="18.5" lengthAdjust="spacing">Cl</text>
<text x="416.9" y="351" font-size="13.5" fill="#000" textLength="15.0" lengthAdjust="spacing">37</text>
<text x="435.7" y="358.6" font-size="20" fill="#000" textLength="18.5" lengthAdjust="spacing">Cl</text>
<text x="484.9" y="351" font-size="13.5" fill="#ffffff" textLength="15.0" lengthAdjust="spacing">38</text>
<text x="503.7" y="358.6" font-size="20" fill="#ffffff" textLength="18.5" lengthAdjust="spacing">Cl</text>
<text x="552.9" y="351" font-size="13.5" fill="#ffffff" textLength="15.0" lengthAdjust="spacing">39</text>
<text x="571.6" y="358.6" font-size="20" fill="#ffffff" textLength="18.5" lengthAdjust="spacing">Cl</text>
<text x="620.9" y="351" font-size="13.5" fill="#ffffff" textLength="15.0" lengthAdjust="spacing">40</text>
<text x="639.6" y="358.6" font-size="20" fill="#ffffff" textLength="18.5" lengthAdjust="spacing">Cl</text>
<text x="688.9" y="351" font-size="13.5" fill="#ffffff" textLength="15.0" lengthAdjust="spacing">41</text>
<text x="707.6" y="358.6" font-size="20" fill="#ffffff" textLength="18.5" lengthAdjust="spacing">Cl</text>
<text x="756.9" y="351" font-size="13.5" fill="#ffffff" textLength="15.0" lengthAdjust="spacing">42</text>
<text x="775.6" y="358.6" font-size="20" fill="#ffffff" textLength="18.5" lengthAdjust="spacing">Cl</text>
<text x="824.9" y="351" font-size="13.5" fill="#ffffff" textLength="15.0" lengthAdjust="spacing">43</text>
<text x="843.6" y="358.6" font-size="20" fill="#ffffff" textLength="18.5" lengthAdjust="spacing">Cl</text>
<text x="892.9" y="351" font-size="13.5" fill="#ffffff" textLength="15.0" lengthAdjust="spacing">44</text>
<text x="911.6" y="358.6" font-size="20" fill="#ffffff" textLength="18.5" lengthAdjust="spacing">Cl</text>
<text x="960.9" y="351" font-size="13.5" fill="#f4ea50" textLength="15.0" lengthAdjust="spacing">45</text>
<text x="979.6" y="358.6" font-size="20" fill="#f4ea50" textLength="18.5" lengthAdjust="spacing">Cl</text>
<text x="1028.8" y="351" font-size="13.5" fill="#f4ea50" textLength="15.0" lengthAdjust="spacing">46</text>
<text x="1047.6" y="358.6" font-size="20" fill="#f4ea50" textLength="18.5" lengthAdjust="spacing">Cl</text>
<text x="1096.8" y="351" font-size="13.5" fill="#ffffff" textLength="15.0" lengthAdjust="spacing">47</text>
<text x="1115.6" y="358.6" font-size="20" fill="#ffffff" textLength="18.5" lengthAdjust="spacing">Cl</text>
<text x="1164.8" y="351" font-size="13.5" fill="#ffffff" textLength="15.0" lengthAdjust="spacing">48</text>
<text x="1183.6" y="358.6" font-size="20" fill="#ffffff" textLength="18.5" lengthAdjust="spacing">Cl</text>
<text x="1232.8" y="351" font-size="13.5" fill="#ffffff" textLength="15.0" lengthAdjust="spacing">49</text>
<text x="1251.6" y="358.6" font-size="20" fill="#ffffff" textLength="18.5" lengthAdjust="spacing">Cl</text>
<text x="1300.8" y="351" font-size="13.5" fill="#ffffff" textLength="15.0" lengthAdjust="spacing">50</text>
<text x="1319.6" y="358.6" font-size="20" fill="#ffffff" textLength="18.5" lengthAdjust="spacing">Cl</text>
<text x="351.4" y="419" font-size="13.5" fill="#ffffff" textLength="15.0" lengthAdjust="spacing">35</text>
<text x="370.2" y="426.6" font-size="20" fill="#ffffff" textLength="13.5" lengthAdjust="spacing">S</text>
<text x="419.4" y="419" font-size="13.5" fill="#000" textLength="15.0" lengthAdjust="spacing">36</text>
<text x="438.2" y="426.6" font-size="20" fill="#000" textLength="13.5" lengthAdjust="spacing">S</text>
<text x="487.4" y="419" font-size="13.5" fill="#ffffff" textLength="15.0" lengthAdjust="spacing">37</text>
<text x="506.2" y="426.6" font-size="20" fill="#ffffff" textLength="13.5" lengthAdjust="spacing">S</text>
<text x="555.4" y="419" font-size="13.5" fill="#ffffff" textLength="15.0" lengthAdjust="spacing">38</text>
<text x="574.1" y="426.6" font-size="20" fill="#ffffff" textLength="13.5" lengthAdjust="spacing">S</text>
<text x="623.4" y="419" font-size="13.5" fill="#ffffff" textLength="15.0" lengthAdjust="spacing">39</text>
<text x="642.1" y="426.6" font-size="20" fill="#ffffff" textLength="13.5" lengthAdjust="spacing">S</text>
<text x="691.4" y="419" font-size="13.5" fill="#ffffff" textLength="15.0" lengthAdjust="spacing">40</text>
<text x="710.1" y="426.6" font-size="20" fill="#ffffff" textLength="13.5" lengthAdjust="spacing">S</text>
<text x="759.4" y="419" font-size="13.5" fill="#ffffff" textLength="15.0" lengthAdjust="spacing">41</text>
<text x="778.1" y="426.6" font-size="20" fill="#ffffff" textLength="13.5" lengthAdjust="spacing">S</text>
<text x="827.4" y="419" font-size="13.5" fill="#000" textLength="15.0" lengthAdjust="spacing">42</text>
<text x="846.1" y="426.6" font-size="20" fill="#000" textLength="13.5" lengthAdjust="spacing">S</text>
<text x="895.4" y="419" font-size="13.5" fill="#f4ea50" textLength="15.0" lengthAdjust="spacing">43</text>
<text x="914.1" y="426.6" font-size="20" fill="#f4ea50" textLength="13.5" lengthAdjust="spacing">S</text>
<text x="963.4" y="419" font-size="13.5" fill="#f4ea50" textLength="15.0" lengthAdjust="spacing">44</text>
<text x="982.1" y="426.6" font-size="20" fill="#f4ea50" textLength="13.5" lengthAdjust="spacing">S</text>
<text x="1031.3" y="419" font-size="13.5" fill="#f4ea50" textLength="15.0" lengthAdjust="spacing">45</text>
<text x="1050.1" y="426.6" font-size="20" fill="#f4ea50" textLength="13.5" lengthAdjust="spacing">S</text>
<text x="1099.3" y="419" font-size="13.5" fill="#ffffff" textLength="15.0" lengthAdjust="spacing">46</text>
<text x="1118.1" y="426.6" font-size="20" fill="#ffffff" textLength="13.5" lengthAdjust="spacing">S</text>
<text x="1167.3" y="419" font-size="13.5" fill="#ffffff" textLength="15.0" lengthAdjust="spacing">47</text>
<text x="1186.1" y="426.6" font-size="20" fill="#ffffff" textLength="13.5" lengthAdjust="spacing">S</text>
<text x="1235.3" y="419" font-size="13.5" fill="#ffffff" textLength="15.0" lengthAdjust="spacing">48</text>
<text x="1254.1" y="426.6" font-size="20" fill="#ffffff" textLength="13.5" lengthAdjust="spacing">S</text>
<text x="1303.3" y="419" font-size="13.5" fill="#ffffff" textLength="15.0" lengthAdjust="spacing">49</text>
<text x="1322.1" y="426.6" font-size="20" fill="#ffffff" textLength="13.5" lengthAdjust="spacing">S</text>
<text x="351.4" y="487" font-size="13.5" fill="#ffffff" textLength="15.0" lengthAdjust="spacing">34</text>
<text x="370.2" y="494.6" font-size="20" fill="#ffffff" textLength="13.5" lengthAdjust="spacing">P</text>
<text x="419.4" y="487" font-size="13.5" fill="#ffffff" textLength="15.0" lengthAdjust="spacing">35</text>
<text x="438.2" y="494.6" font-size="20" fill="#ffffff" textLength="13.5" lengthAdjust="spacing">P</text>
<text x="487.4" y="487" font-size="13.5" fill="#ffffff" textLength="15.0" lengthAdjust="spacing">36</text>
<text x="506.2" y="494.6" font-size="20" fill="#ffffff" textLength="13.5" lengthAdjust="spacing">P</text>
<text x="555.4" y="487" font-size="13.5" fill="#ffffff" textLength="15.0" lengthAdjust="spacing">37</text>
<text x="574.1" y="494.6" font-size="20" fill="#ffffff" textLength="13.5" lengthAdjust="spacing">P</text>
<text x="623.4" y="487" font-size="13.5" fill="#f4ea50" textLength="15.0" lengthAdjust="spacing">38</text>
<text x="642.1" y="494.6" font-size="20" fill="#f4ea50" textLength="13.5" lengthAdjust="spacing">P</text>
<text x="691.4" y="487" font-size="13.5" fill="#f4ea50" textLength="15.0" lengthAdjust="spacing">39</text>
<text x="710.1" y="494.6" font-size="20" fill="#f4ea50" textLength="13.5" lengthAdjust="spacing">P</text>
<text x="759.4" y="487" font-size="13.5" fill="#f4ea50" textLength="15.0" lengthAdjust="spacing">40</text>
<text x="778.1" y="494.6" font-size="20" fill="#f4ea50" textLength="13.5" lengthAdjust="spacing">P</text>
<text x="827.4" y="487" font-size="13.5" fill="#f4ea50" textLength="15.0" lengthAdjust="spacing">41</text>
<text x="846.1" y="494.6" font-size="20" fill="#f4ea50" textLength="13.5" lengthAdjust="spacing">P</text>
<text x="895.4" y="487" font-size="13.5" fill="#f4ea50" textLength="15.0" lengthAdjust="spacing">42</text>
<text x="914.1" y="494.6" font-size="20" fill="#f4ea50" textLength="13.5" lengthAdjust="spacing">P</text>
<text x="963.4" y="487" font-size="13.5" fill="#f4ea50" textLength="15.0" lengthAdjust="spacing">43</text>
<text x="982.1" y="494.6" font-size="20" fill="#f4ea50" textLength="13.5" lengthAdjust="spacing">P</text>
<text x="1031.3" y="487" font-size="13.5" fill="#ffffff" textLength="15.0" lengthAdjust="spacing">44</text>
<text x="1050.1" y="494.6" font-size="20" fill="#ffffff" textLength="13.5" lengthAdjust="spacing">P</text>
<text x="1099.3" y="487" font-size="13.5" fill="#ffffff" textLength="15.0" lengthAdjust="spacing">45</text>
<text x="1118.1" y="494.6" font-size="20" fill="#ffffff" textLength="13.5" lengthAdjust="spacing">P</text>
<text x="1167.3" y="487" font-size="13.5" fill="#ffffff" textLength="15.0" lengthAdjust="spacing">46</text>
<text x="1186.1" y="494.6" font-size="20" fill="#ffffff" textLength="13.5" lengthAdjust="spacing">P</text>
<text x="1235.3" y="487" font-size="13.5" fill="#ffffff" textLength="15.0" lengthAdjust="spacing">47</text>
<text x="1254.1" y="494.6" font-size="20" fill="#ffffff" textLength="13.5" lengthAdjust="spacing">P</text>
<text x="1303.3" y="487" font-size="13.5" fill="#6a6a6a" textLength="15.0" lengthAdjust="spacing">48</text>
<text x="1322.1" y="494.6" font-size="20" fill="#6a6a6a" textLength="13.5" lengthAdjust="spacing">P</text>
<text x="349.6" y="555" font-size="13.5" fill="#ffffff" textLength="15.0" lengthAdjust="spacing">33</text>
<text x="368.4" y="562.6" font-size="20" fill="#ffffff" textLength="17" lengthAdjust="spacing">Si</text>
<text x="417.6" y="555" font-size="13.5" fill="#ffffff" textLength="15.0" lengthAdjust="spacing">34</text>
<text x="436.4" y="562.6" font-size="20" fill="#ffffff" textLength="17" lengthAdjust="spacing">Si</text>
<text x="485.6" y="555" font-size="13.5" fill="#ffffff" textLength="15.0" lengthAdjust="spacing">35</text>
<text x="504.4" y="562.6" font-size="20" fill="#ffffff" textLength="17" lengthAdjust="spacing">Si</text>
<text x="553.6" y="555" font-size="13.5" fill="#f4ea50" textLength="15.0" lengthAdjust="spacing">36</text>
<text x="572.4" y="562.6" font-size="20" fill="#f4ea50" textLength="17" lengthAdjust="spacing">Si</text>
<text x="621.6" y="555" font-size="13.5" fill="#f4ea50" textLength="15.0" lengthAdjust="spacing">37</text>
<text x="640.4" y="562.6" font-size="20" fill="#f4ea50" textLength="17" lengthAdjust="spacing">Si</text>
<text x="689.6" y="555" font-size="13.5" fill="#f4ea50" textLength="15.0" lengthAdjust="spacing">38</text>
<text x="708.4" y="562.6" font-size="20" fill="#f4ea50" textLength="17" lengthAdjust="spacing">Si</text>
<text x="757.6" y="555" font-size="13.5" fill="#f4ea50" textLength="15.0" lengthAdjust="spacing">39</text>
<text x="776.4" y="562.6" font-size="20" fill="#f4ea50" textLength="17" lengthAdjust="spacing">Si</text>
<text x="825.6" y="555" font-size="13.5" fill="#f4ea50" textLength="15.0" lengthAdjust="spacing">40</text>
<text x="844.4" y="562.6" font-size="20" fill="#f4ea50" textLength="17" lengthAdjust="spacing">Si</text>
<text x="893.6" y="555" font-size="13.5" fill="#f4ea50" textLength="15.0" lengthAdjust="spacing">41</text>
<text x="912.4" y="562.6" font-size="20" fill="#f4ea50" textLength="17" lengthAdjust="spacing">Si</text>
<text x="961.6" y="555" font-size="13.5" fill="#ffffff" textLength="15.0" lengthAdjust="spacing">42</text>
<text x="980.4" y="562.6" font-size="20" fill="#ffffff" textLength="17" lengthAdjust="spacing">Si</text>
<text x="1029.6" y="555" font-size="13.5" fill="#ffffff" textLength="15.0" lengthAdjust="spacing">43</text>
<text x="1048.4" y="562.6" font-size="20" fill="#ffffff" textLength="17" lengthAdjust="spacing">Si</text>
<text x="1097.6" y="555" font-size="13.5" fill="#ffffff" textLength="15.0" lengthAdjust="spacing">44</text>
<text x="1116.4" y="562.6" font-size="20" fill="#ffffff" textLength="17" lengthAdjust="spacing">Si</text>
<text x="1165.6" y="555" font-size="13.5" fill="#ffffff" textLength="15.0" lengthAdjust="spacing">45</text>
<text x="1184.4" y="562.6" font-size="20" fill="#ffffff" textLength="17" lengthAdjust="spacing">Si</text>
<text x="1233.6" y="555" font-size="13.5" fill="#6a6a6a" textLength="15.0" lengthAdjust="spacing">46</text>
<text x="1252.4" y="562.6" font-size="20" fill="#6a6a6a" textLength="17" lengthAdjust="spacing">Si</text>
<text x="349.4" y="623" font-size="13.5" fill="#f4ea50" textLength="15.0" lengthAdjust="spacing">32</text>
<text x="368.2" y="630.6" font-size="20" fill="#f4ea50" textLength="17.5" lengthAdjust="spacing">Al</text>
<text x="417.4" y="623" font-size="13.5" fill="#f4ea50" textLength="15.0" lengthAdjust="spacing">33</text>
<text x="436.2" y="630.6" font-size="20" fill="#f4ea50" textLength="17.5" lengthAdjust="spacing">Al</text>
<text x="485.4" y="623" font-size="13.5" fill="#f4ea50" textLength="15.0" lengthAdjust="spacing">34</text>
<text x="504.2" y="630.6" font-size="20" fill="#f4ea50" textLength="17.5" lengthAdjust="spacing">Al</text>
<text x="553.4" y="623" font-size="13.5" fill="#f4ea50" textLength="15.0" lengthAdjust="spacing">35</text>
<text x="572.1" y="630.6" font-size="20" fill="#f4ea50" textLength="17.5" lengthAdjust="spacing">Al</text>
<text x="621.4" y="623" font-size="13.5" fill="#ffffff" textLength="15.0" lengthAdjust="spacing">36</text>
<text x="640.1" y="630.6" font-size="20" fill="#ffffff" textLength="17.5" lengthAdjust="spacing">Al</text>
<text x="689.4" y="623" font-size="13.5" fill="#f4ea50" textLength="15.0" lengthAdjust="spacing">37</text>
<text x="708.1" y="630.6" font-size="20" fill="#f4ea50" textLength="17.5" lengthAdjust="spacing">Al</text>
<text x="757.4" y="623" font-size="13.5" fill="#f4ea50" textLength="15.0" lengthAdjust="spacing">38</text>
<text x="776.1" y="630.6" font-size="20" fill="#f4ea50" textLength="17.5" lengthAdjust="spacing">Al</text>
<text x="825.4" y="623" font-size="13.5" fill="#f4ea50" textLength="15.0" lengthAdjust="spacing">39</text>
<text x="844.1" y="630.6" font-size="20" fill="#f4ea50" textLength="17.5" lengthAdjust="spacing">Al</text>
<text x="893.4" y="623" font-size="13.5" fill="#ffffff" textLength="15.0" lengthAdjust="spacing">40</text>
<text x="912.1" y="630.6" font-size="20" fill="#ffffff" textLength="17.5" lengthAdjust="spacing">Al</text>
<text x="961.4" y="623" font-size="13.5" fill="#ffffff" textLength="15.0" lengthAdjust="spacing">41</text>
<text x="980.1" y="630.6" font-size="20" fill="#ffffff" textLength="17.5" lengthAdjust="spacing">Al</text>
<text x="1029.3" y="623" font-size="13.5" fill="#ffffff" textLength="15.0" lengthAdjust="spacing">42</text>
<text x="1048.1" y="630.6" font-size="20" fill="#ffffff" textLength="17.5" lengthAdjust="spacing">Al</text>
<text x="1097.3" y="623" font-size="13.5" fill="#ffffff" textLength="15.0" lengthAdjust="spacing">43</text>
<text x="1116.1" y="630.6" font-size="20" fill="#ffffff" textLength="17.5" lengthAdjust="spacing">Al</text>
<text x="1233.3" y="623" font-size="13.5" fill="#6a6a6a" textLength="15.0" lengthAdjust="spacing">45</text>
<text x="1252.1" y="630.6" font-size="20" fill="#6a6a6a" textLength="17.5" lengthAdjust="spacing">Al</text>
<text x="344.9" y="691" font-size="13.5" fill="#f4ea50" textLength="15.0" lengthAdjust="spacing">31</text>
<text x="363.7" y="698.6" font-size="20" fill="#f4ea50" textLength="26.5" lengthAdjust="spacing">Mg</text>
<text x="412.9" y="691" font-size="13.5" fill="#f4ea50" textLength="15.0" lengthAdjust="spacing">32</text>
<text x="431.7" y="698.6" font-size="20" fill="#f4ea50" textLength="26.5" lengthAdjust="spacing">Mg</text>
<text x="480.9" y="691" font-size="13.5" fill="#f4ea50" textLength="15.0" lengthAdjust="spacing">33</text>
<text x="499.7" y="698.6" font-size="20" fill="#f4ea50" textLength="26.5" lengthAdjust="spacing">Mg</text>
<text x="548.9" y="691" font-size="13.5" fill="#f4ea50" textLength="15.0" lengthAdjust="spacing">34</text>
<text x="567.6" y="698.6" font-size="20" fill="#f4ea50" textLength="26.5" lengthAdjust="spacing">Mg</text>
<text x="616.9" y="691" font-size="13.5" fill="#f4ea50" textLength="15.0" lengthAdjust="spacing">35</text>
<text x="635.6" y="698.6" font-size="20" fill="#f4ea50" textLength="26.5" lengthAdjust="spacing">Mg</text>
<text x="684.9" y="691" font-size="13.5" fill="#f4ea50" textLength="15.0" lengthAdjust="spacing">36</text>
<text x="703.6" y="698.6" font-size="20" fill="#f4ea50" textLength="26.5" lengthAdjust="spacing">Mg</text>
<text x="752.9" y="691" font-size="13.5" fill="#ffffff" textLength="15.0" lengthAdjust="spacing">37</text>
<text x="771.6" y="698.6" font-size="20" fill="#ffffff" textLength="26.5" lengthAdjust="spacing">Mg</text>
<text x="820.9" y="691" font-size="13.5" fill="#ffffff" textLength="15.0" lengthAdjust="spacing">38</text>
<text x="839.6" y="698.6" font-size="20" fill="#ffffff" textLength="26.5" lengthAdjust="spacing">Mg</text>
<text x="956.9" y="691" font-size="13.5" fill="#ffffff" textLength="15.0" lengthAdjust="spacing">40</text>
<text x="975.6" y="698.6" font-size="20" fill="#ffffff" textLength="26.5" lengthAdjust="spacing">Mg</text>
<text x="345.9" y="759" font-size="13.5" fill="#f4ea50" textLength="15.0" lengthAdjust="spacing">30</text>
<text x="364.7" y="766.6" font-size="20" fill="#f4ea50" textLength="24.5" lengthAdjust="spacing">Na</text>
<text x="413.9" y="759" font-size="13.5" fill="#f4ea50" textLength="15.0" lengthAdjust="spacing">31</text>
<text x="432.7" y="766.6" font-size="20" fill="#f4ea50" textLength="24.5" lengthAdjust="spacing">Na</text>
<text x="481.9" y="759" font-size="13.5" fill="#f4ea50" textLength="15.0" lengthAdjust="spacing">32</text>
<text x="500.7" y="766.6" font-size="20" fill="#f4ea50" textLength="24.5" lengthAdjust="spacing">Na</text>
<text x="549.9" y="759" font-size="13.5" fill="#f4ea50" textLength="15.0" lengthAdjust="spacing">33</text>
<text x="568.6" y="766.6" font-size="20" fill="#f4ea50" textLength="24.5" lengthAdjust="spacing">Na</text>
<text x="617.9" y="759" font-size="13.5" fill="#f4ea50" textLength="15.0" lengthAdjust="spacing">34</text>
<text x="636.6" y="766.6" font-size="20" fill="#f4ea50" textLength="24.5" lengthAdjust="spacing">Na</text>
<text x="685.9" y="759" font-size="13.5" fill="#ffffff" textLength="15.0" lengthAdjust="spacing">35</text>
<text x="704.6" y="766.6" font-size="20" fill="#ffffff" textLength="24.5" lengthAdjust="spacing">Na</text>
<text x="821.9" y="759" font-size="13.5" fill="#ffffff" textLength="15.0" lengthAdjust="spacing">37</text>
<text x="840.6" y="766.6" font-size="20" fill="#ffffff" textLength="24.5" lengthAdjust="spacing">Na</text>
<text x="957.9" y="759" font-size="13.5" fill="#ffffff" textLength="15.0" lengthAdjust="spacing">39</text>
<text x="976.6" y="766.6" font-size="20" fill="#ffffff" textLength="24.5" lengthAdjust="spacing">Na</text>
<rect x="806" y="127" width="5" height="6" fill="#00ee00" stroke="#003000" stroke-width="0.7"/>
<rect x="807" y="125" width="3.5" height="2" fill="#d0ecff" stroke="#003000" stroke-width="0.6"/>
<rect x="874" y="127" width="5" height="6" fill="#00ee00" stroke="#003000" stroke-width="0.7"/>
<rect x="875" y="125" width="3.5" height="2" fill="#d0ecff" stroke="#003000" stroke-width="0.6"/>
<rect x="1010" y="127" width="5" height="6" fill="#00ee00" stroke="#003000" stroke-width="0.7"/>
<rect x="1011" y="125" width="3.5" height="2" fill="#d0ecff" stroke="#003000" stroke-width="0.6"/>
<rect x="1078" y="127" width="5" height="6" fill="#00ee00" stroke="#003000" stroke-width="0.7"/>
<rect x="1079" y="125" width="3.5" height="2" fill="#d0ecff" stroke="#003000" stroke-width="0.6"/>
<rect x="874" y="195" width="5" height="6" fill="#00ee00" stroke="#003000" stroke-width="0.7"/>
<rect x="875" y="193" width="3.5" height="2" fill="#d0ecff" stroke="#003000" stroke-width="0.6"/>
<rect x="398" y="671" width="5" height="6" fill="#00ee00" stroke="#003000" stroke-width="0.7"/>
<rect x="399" y="669" width="3.5" height="2" fill="#d0ecff" stroke="#003000" stroke-width="0.6"/>
<rect x="398" y="739" width="5" height="6" fill="#00ee00" stroke="#003000" stroke-width="0.7"/>
<rect x="399" y="737" width="3.5" height="2" fill="#d0ecff" stroke="#003000" stroke-width="0.6"/>
<rect x="942" y="467" width="5" height="6" fill="#00ee00" stroke="#003000" stroke-width="0.7"/>
<rect x="943" y="465" width="3.5" height="2" fill="#d0ecff" stroke="#003000" stroke-width="0.6"/>
<rect x="601.5" y="329.5" width="4.5" height="3" fill="none" stroke="#111" stroke-width="1"/>
<rect x="533.5" y="397.5" width="4.5" height="3" fill="none" stroke="#111" stroke-width="1"/>
<rect x="1213.5" y="261.5" width="4.5" height="3" fill="none" stroke="#111" stroke-width="1"/>
</g>
<rect x="1341" y="106" width="14" height="667" fill="#e6e6e6"/>
<rect x="1341" y="106" width="14" height="13" fill="#fbfbfb"/>
<path d="M1344.2 114.2l3.8-4.2 3.8 4.2z" fill="#505050"/>
<rect x="1341" y="760" width="14" height="13" fill="#fbfbfb"/>
<path d="M1344.2 764.4l3.8 4.2 3.8-4.2z" fill="#505050"/>
<rect x="1341" y="646" width="14" height="52" fill="#fbfbfb"/>
<rect x="349" y="773" width="992" height="14" fill="#e6e6e6"/>
<rect x="349" y="773" width="14" height="14" fill="#fbfbfb"/>
<path d="M356.8 775.8l-4.2 4.2 4.2 4.2z" fill="#505050"/>
<rect x="1327" y="773" width="14" height="14" fill="#fbfbfb"/>
<path d="M1332 775.8l4.2 4.2-4.2 4.2z" fill="#505050"/>
<rect x="458" y="773" width="70" height="14" fill="#fbfbfb"/>
<rect x="1341" y="773" width="14" height="14" fill="#f0f0f0"/>
<rect x="1355" y="104" width="1" height="684" fill="#969696"/>
<rect x="1356" y="104" width="1" height="685" fill="#d8d8d8"/>
<rect x="349" y="787" width="1007" height="1" fill="#969696"/>
<rect x="349" y="788" width="1008" height="1" fill="#d8d8d8"/>
<rect x="347" y="104" width="1010" height="2" fill="#ffffff"/>
<rect x="347" y="104" width="2" height="685" fill="#ffffff"/>
<rect x="350" y="107" width="415" height="206" fill="#000"/>
<polygon points="350,107 765,107 747,134 368,134" fill="url(#bvT)"/>
<polygon points="350,313 765,313 747,286 368,286" fill="url(#bvB)"/>
<polygon points="350,107 368,134 368,286 350,313" fill="url(#bvL)"/>
<polygon points="765,107 747,134 747,286 765,313" fill="url(#bvR)"/>
<rect x="349.5" y="106.5" width="416" height="207" fill="none" stroke="#18e018" stroke-width="1.4"/>
<g stroke="#0e7e0e" stroke-width="1.6" fill="none"><path d="M385 176H416"/><path d="M438 184L485 233"/><path d="M507 241H575"/><path d="M597 232L642 188"/><path d="M662 179H697"/></g>
<polygon points="416,165.8 444.6,177.8 431.1,192 416,185" fill="#0e7e0e"/>
<polygon points="492,226 507,231.1 507,251.6 479.4,239.2" fill="#0e7e0e"/>
<polygon points="575.1,231.1 589,226 603.6,238.9 575.1,251.6" fill="#0e7e0e"/>
<polygon points="634.3,181 662.5,169 662.5,189.5 648.2,194.6" fill="#0e7e0e"/>
<rect x="380" y="167" width="5" height="18" fill="#70ffff"/>
<g transform="translate(393.5,175.5) rotate(0)"><rect x="-2.6" y="-6.5" width="5.2" height="13" rx="2.2" fill="#0c6a0c" stroke="#148c14" stroke-width="1"/><rect x="-1" y="-4.5" width="2" height="9" fill="#a8a078"/></g>
<g transform="translate(401,175.5) rotate(0)"><rect x="-2.6" y="-6.5" width="5.2" height="13" rx="2.2" fill="#0c6a0c" stroke="#148c14" stroke-width="1"/><rect x="-1" y="-4.5" width="2" height="9" fill="#a8a078"/></g>
<g transform="translate(408.5,175.5) rotate(0)"><rect x="-2.6" y="-6.5" width="5.2" height="13" rx="2.2" fill="#0c6a0c" stroke="#148c14" stroke-width="1"/><rect x="-1" y="-4.5" width="2" height="9" fill="#a8a078"/></g>
<g transform="translate(514,241.3) rotate(0)"><rect x="-2.6" y="-6.5" width="5.2" height="13" rx="2.2" fill="#0c6a0c" stroke="#148c14" stroke-width="1"/><rect x="-1" y="-4.5" width="2" height="9" fill="#a8a078"/></g>
<g transform="translate(521.5,241.3) rotate(0)"><rect x="-2.6" y="-6.5" width="5.2" height="13" rx="2.2" fill="#0c6a0c" stroke="#148c14" stroke-width="1"/><rect x="-1" y="-4.5" width="2" height="9" fill="#a8a078"/></g>
<g transform="translate(529,241.3) rotate(0)"><rect x="-2.6" y="-6.5" width="5.2" height="13" rx="2.2" fill="#0c6a0c" stroke="#148c14" stroke-width="1"/><rect x="-1" y="-4.5" width="2" height="9" fill="#a8a078"/></g>
<g transform="translate(552,241.3) rotate(0)"><rect x="-2.6" y="-6.5" width="5.2" height="13" rx="2.2" fill="#0c6a0c" stroke="#148c14" stroke-width="1"/><rect x="-1" y="-4.5" width="2" height="9" fill="#a8a078"/></g>
<g transform="translate(559.7,241.3) rotate(0)"><rect x="-2.6" y="-6.5" width="5.2" height="13" rx="2.2" fill="#0c6a0c" stroke="#148c14" stroke-width="1"/><rect x="-1" y="-4.5" width="2" height="9" fill="#a8a078"/></g>
<g transform="translate(567.3,241.3) rotate(0)"><rect x="-2.6" y="-6.5" width="5.2" height="13" rx="2.2" fill="#0c6a0c" stroke="#148c14" stroke-width="1"/><rect x="-1" y="-4.5" width="2" height="9" fill="#a8a078"/></g>
<g transform="translate(670,179) rotate(0)"><rect x="-2.6" y="-6.5" width="5.2" height="13" rx="2.2" fill="#0c6a0c" stroke="#148c14" stroke-width="1"/><rect x="-1" y="-4.5" width="2" height="9" fill="#a8a078"/></g>
<g transform="translate(678,179) rotate(0)"><rect x="-2.6" y="-6.5" width="5.2" height="13" rx="2.2" fill="#0c6a0c" stroke="#148c14" stroke-width="1"/><rect x="-1" y="-4.5" width="2" height="9" fill="#a8a078"/></g>
<g transform="translate(687,179) rotate(0)"><rect x="-2.6" y="-6.5" width="5.2" height="13" rx="2.2" fill="#0c6a0c" stroke="#148c14" stroke-width="1"/><rect x="-1" y="-4.5" width="2" height="9" fill="#a8a078"/></g>
<g transform="translate(443.1,189.8) rotate(46)"><rect x="-2.6" y="-6.5" width="5.2" height="13" rx="2.2" fill="#0c6a0c" stroke="#148c14" stroke-width="1"/><rect x="-1" y="-4.5" width="2" height="9" fill="#a8a078"/></g>
<g transform="translate(447.5,194.3) rotate(46)"><rect x="-2.6" y="-6.5" width="5.2" height="13" rx="2.2" fill="#0c6a0c" stroke="#148c14" stroke-width="1"/><rect x="-1" y="-4.5" width="2" height="9" fill="#a8a078"/></g>
<g transform="translate(451.9,198.8) rotate(46)"><rect x="-2.6" y="-6.5" width="5.2" height="13" rx="2.2" fill="#0c6a0c" stroke="#148c14" stroke-width="1"/><rect x="-1" y="-4.5" width="2" height="9" fill="#a8a078"/></g>
<g transform="translate(470.1,217.5) rotate(46)"><rect x="-2.6" y="-6.5" width="5.2" height="13" rx="2.2" fill="#0c6a0c" stroke="#148c14" stroke-width="1"/><rect x="-1" y="-4.5" width="2" height="9" fill="#a8a078"/></g>
<g transform="translate(474.5,222.0) rotate(46)"><rect x="-2.6" y="-6.5" width="5.2" height="13" rx="2.2" fill="#0c6a0c" stroke="#148c14" stroke-width="1"/><rect x="-1" y="-4.5" width="2" height="9" fill="#a8a078"/></g>
<g transform="translate(478.9,226.5) rotate(46)"><rect x="-2.6" y="-6.5" width="5.2" height="13" rx="2.2" fill="#0c6a0c" stroke="#148c14" stroke-width="1"/><rect x="-1" y="-4.5" width="2" height="9" fill="#a8a078"/></g>
<g transform="translate(602.0,226.4) rotate(-44.5)"><rect x="-2.6" y="-6.5" width="5.2" height="13" rx="2.2" fill="#0c6a0c" stroke="#148c14" stroke-width="1"/><rect x="-1" y="-4.5" width="2" height="9" fill="#a8a078"/></g>
<g transform="translate(606.5,222.0) rotate(-44.5)"><rect x="-2.6" y="-6.5" width="5.2" height="13" rx="2.2" fill="#0c6a0c" stroke="#148c14" stroke-width="1"/><rect x="-1" y="-4.5" width="2" height="9" fill="#a8a078"/></g>
<g transform="translate(611.0,217.6) rotate(-44.5)"><rect x="-2.6" y="-6.5" width="5.2" height="13" rx="2.2" fill="#0c6a0c" stroke="#148c14" stroke-width="1"/><rect x="-1" y="-4.5" width="2" height="9" fill="#a8a078"/></g>
<g transform="translate(624.7,203.9) rotate(-44.5)"><rect x="-2.6" y="-6.5" width="5.2" height="13" rx="2.2" fill="#0c6a0c" stroke="#148c14" stroke-width="1"/><rect x="-1" y="-4.5" width="2" height="9" fill="#a8a078"/></g>
<g transform="translate(629.2,199.5) rotate(-44.5)"><rect x="-2.6" y="-6.5" width="5.2" height="13" rx="2.2" fill="#0c6a0c" stroke="#148c14" stroke-width="1"/><rect x="-1" y="-4.5" width="2" height="9" fill="#a8a078"/></g>
<g transform="translate(633.7,195.1) rotate(-44.5)"><rect x="-2.6" y="-6.5" width="5.2" height="13" rx="2.2" fill="#0c6a0c" stroke="#148c14" stroke-width="1"/><rect x="-1" y="-4.5" width="2" height="9" fill="#a8a078"/></g>
<path d="M453.5 218L471 200.3" stroke="#fff" stroke-width="2.6"/>
<rect x="540" y="229" width="3" height="26" fill="#fff"/>
<rect x="698" y="170" width="3" height="19" fill="#ff1090"/>
<rect x="706" y="170" width="3" height="19" fill="#ff1090"/>
<rect x="722" y="170" width="3" height="19" fill="#ff1090"/>
<rect x="730" y="170" width="3" height="19" fill="#ff1090"/>
<rect x="714" y="167" width="3" height="25" fill="#fff"/>
<rect x="955" y="635" width="231" height="137" fill="#000"/>
<polygon points="955,635 1186,635 1158,648 983,648" fill="url(#bwT)"/>
<polygon points="955,772 1186,772 1158,754 983,754" fill="url(#bwB)"/>
<polygon points="955,635 983,648 983,754 955,772" fill="url(#bwL)"/>
<polygon points="1186,635 1158,648 1158,754 1186,772" fill="url(#bwR)"/>
<polygon points="982.2,758.9 1001,730 1036,702 1066,682 1098,662 1118.2,649.1 1161,647.7 1161,683.6 1133.6,690.4 1108,700.7 1077.2,714.4 1039.5,734.9 1013.9,746.9" fill="#8a8a8a"/>
<path d="M1000 751.2v3M1002 750.4v5M1004 749.6v3M1006 748.9v5M1008 748.1v3M1010 747.4v5M1012 746.6v3M1014 745.9v5M1016 744.9v3M1018 744.0v5M1020 743.0v3M1022 742.1v5M1024 741.2v3M1026 740.2v5M1028 739.3v3M1030 738.4v5M1032 737.4v3M1034 736.5v5M1036 735.5v3M1038 734.6v5M1040 733.6v3M1042 732.5v5M1044 731.5v3M1046 730.4v5M1048 729.3v3M1050 728.2v5M1052 727.1v3M1054 726.0v5M1056 724.9v3M1058 723.8v5M1060 722.8v3M1062 721.7v5M1064 720.6v3M1066 719.5v5M1068 718.4v3M1070 717.3v5M1072 716.2v3M1074 715.1v5M1076 714.1v3M1078 713.0v5M1080 712.2v3M1082 711.3v5M1084 710.4v3M1086 709.5v5M1088 708.6v3M1090 707.7v5M1092 706.8v3M1094 705.9v5M1096 705.0v3M1098 704.1v5M1100 703.3v3M1102 702.4v5M1104 701.5v3M1106 700.6v5M1108 699.7v3M1110 698.9v5M1112 698.1v3M1114 697.3v5M1116 696.5v3M1118 695.7v5M1120 694.9v3M1122 694.1v5M1124 693.3v3M1126 692.5v5M1128 691.7v3M1130 690.8v5M1132 690.0v3M1134 689.3v5M1136 688.8v3M1138 688.3v5M1140 687.8v3M1142 687.3v5M1144 686.8v3M1146 686.3v5M1148 685.8v3M1150 685.3v5M1152 684.8v3M1154 684.3v5M1156 683.8v3M1158 683.3v5M1114.7 652h-9M1110.0 655h-9M1105.3 658h-9M1100.6 661h-9M1095.8 664h-9M1091.0 667h-9M1086.2 670h-9M1081.4 673h-9M1076.6 676h-9M1071.8 679h-9M1067.0 682h-9M1062.5 685h-9M1058.0 688h-9M1053.5 691h-9M1049.0 694h-9M1044.5 697h-9M1040.0 700h-9M1035.8 703h-9M1032.0 706h-9M1028.2 709h-9M1024.5 712h-9M1020.8 715h-9M1017.0 718h-9M1013.2 721h-9M1009.5 724h-9M1005.8 727h-9M1002.0 730h-9M1000.0 733h-9M998.1 736h-9M996.1 739h-9M994.2 742h-9" stroke="#8a8a8a" stroke-width="1" fill="none"/>
<polygon points="982.2,758.9 1010.4,746.9 1039.5,729.8 1073.7,707.6 1108,683.6 1133.6,668.2 1142,658 1125,661.4 1108,673.3 1090.8,683.6 1065.2,700.7 1031,723 1005.3,741.8" fill="#5a22e6"/>
<polygon points="982.2,758.9 1001.9,733.2 1036.1,705.8 1066.9,687 1101.1,673.3 1108,673.3 1090.8,683.6 1065.2,700.7 1031,723 1005.3,741.8" fill="#ee3226"/>
<polygon points="1066.9,687 1084,676.8 1104.5,669.1 1125,659.7 1137,654.5 1128.5,663.1 1108,672.5 1101.1,674.2 1084,679.3 1072,688.7" fill="#b464dc"/>
<polygon points="1105,673 1109,667 1116,665.5 1117,669 1112,674" fill="#f8f018"/>
<polygon points="1134,655 1140,650 1152,647.5 1147,651.5 1140,655" fill="#f0e820"/>
<path d="M1066.9 684.5L1086 675 1108 668" stroke="#f0e828" stroke-width="1.2" fill="none"/>
<path d="M983 758L1031 722 1065 700 1108 673.5" stroke="#e0d8e8" stroke-width=".8" fill="none"/>
<rect x="1003.6" y="739.7" width="7.8" height="7.6" fill="#fff"/>
<text x="972.5" y="658.8" font-size="12" fill="#2a8aba" font-weight="bold" textLength="70.8" lengthAdjust="spacingAndGlyphs">PROJECTILE</text>
<text x="978" y="672.5" font-size="12" fill="#9cac9c" font-weight="bold" textLength="60.7" lengthAdjust="spacingAndGlyphs">FRAGMENT</text>
<g transform="translate(1072,646) rotate(0)"><path d="M0-10.5l12 10.5h-5.5v9.5h-13v-9.5h-5.5z" fill="#c41818" stroke="#5c0808" stroke-width="1.2"/><path d="M0-6l5.5 5.5h-2.7v7h-5.6v-7h-2.7z" fill="#201878"/></g>
<g transform="translate(1173,647) rotate(45)"><path d="M0-10.5l12 10.5h-5.5v9.5h-13v-9.5h-5.5z" fill="#c41818" stroke="#5c0808" stroke-width="1.2"/><path d="M0-6l5.5 5.5h-2.7v7h-5.6v-7h-2.7z" fill="#201878"/></g>
<g transform="translate(1172,703) rotate(90)"><path d="M0-10.5l12 10.5h-5.5v9.5h-13v-9.5h-5.5z" fill="#c41818" stroke="#5c0808" stroke-width="1.2"/><path d="M0-6l5.5 5.5h-2.7v7h-5.6v-7h-2.7z" fill="#201878"/></g>
<g transform="translate(1173,759.5) rotate(135)"><path d="M0-10.5l12 10.5h-5.5v9.5h-13v-9.5h-5.5z" fill="#c41818" stroke="#5c0808" stroke-width="1.2"/><path d="M0-6l5.5 5.5h-2.7v7h-5.6v-7h-2.7z" fill="#201878"/></g>
<g transform="translate(1071.5,761) rotate(180)"><path d="M0-10.5l12 10.5h-5.5v9.5h-13v-9.5h-5.5z" fill="#c41818" stroke="#5c0808" stroke-width="1.2"/><path d="M0-6l5.5 5.5h-2.7v7h-5.6v-7h-2.7z" fill="#201878"/></g>
<g transform="translate(967.5,759.5) rotate(225)"><path d="M0-10.5l12 10.5h-5.5v9.5h-13v-9.5h-5.5z" fill="#c41818" stroke="#5c0808" stroke-width="1.2"/><path d="M0-6l5.5 5.5h-2.7v7h-5.6v-7h-2.7z" fill="#201878"/></g>
<g transform="translate(967.5,703) rotate(270)"><path d="M0-10.5l12 10.5h-5.5v9.5h-13v-9.5h-5.5z" fill="#c41818" stroke="#5c0808" stroke-width="1.2"/><path d="M0-6l5.5 5.5h-2.7v7h-5.6v-7h-2.7z" fill="#201878"/></g>
<rect x="1187" y="635" width="154" height="138" fill="#000"/>
<polygon points="1187,635 1341,635 1322,653 1206,653" fill="url(#bzT)"/>
<polygon points="1187,773 1341,773 1322,753 1206,753" fill="url(#bzB)"/>
<polygon points="1187,635 1206,653 1206,753 1187,773" fill="url(#bzL)"/>
<polygon points="1341,635 1322,653 1322,753 1341,773" fill="url(#bzR)"/>
<circle cx="1254.6" cy="694" r="6" fill="url(#sphP)"/>
<circle cx="1260.6" cy="702.6" r="6" fill="url(#sphG)"/>
<circle cx="1237.3" cy="707" r="10.5" fill="url(#sphB)"/>
<circle cx="1276.2" cy="684.5" r="2.5" fill="#a0a4d8"/>
<rect x="954.5" y="634.5" width="386" height="138" fill="none" stroke="#18e018" stroke-width="1.4"/>
<path d="M1186.5 634v138" stroke="#18e018" stroke-width="1.4"/>
<rect x="1106" y="92" width="100" height="395" fill="#f0f0f0" filter="url(#mshadow)"/>
<rect x="1107" y="93" width="98" height="393" fill="#f0f0f0" stroke="#a2a2a2" stroke-width="2"/>
<text x="1132.5" y="112.8" font-size="12" fill="#1a0808" textLength="31.5" lengthAdjust="spacingAndGlyphs">Target</text>
<text x="1132.5" y="140.8" font-size="12" fill="#1a0808" textLength="40.6" lengthAdjust="spacingAndGlyphs">Stripper</text>
<text x="1132.5" y="168.8" font-size="12" fill="#1a0808" textLength="12.3" lengthAdjust="spacingAndGlyphs">D1</text>
<text x="1132.5" y="196.8" font-size="12" fill="#1a0808" textLength="33.3" lengthAdjust="spacingAndGlyphs">I1_slits</text>
<text x="1132.5" y="224.8" font-size="12" fill="#1a0808" textLength="13.5" lengthAdjust="spacingAndGlyphs">D2</text>
<text x="1132.5" y="252.8" font-size="12" fill="#1a0808" textLength="33.3" lengthAdjust="spacingAndGlyphs">I2_slits</text>
<text x="1132.5" y="280.8" font-size="12" fill="#1a0808" textLength="48.5" lengthAdjust="spacingAndGlyphs">I2_wedge</text>
<text x="1132.5" y="308.8" font-size="12" fill="#1a0808" textLength="13.5" lengthAdjust="spacingAndGlyphs">D3</text>
<text x="1132.5" y="336.8" font-size="12" fill="#1a0808" textLength="13.8" lengthAdjust="spacingAndGlyphs">D4</text>
<text x="1132.5" y="364.8" font-size="12" fill="#1a0808" textLength="52.4" lengthAdjust="spacingAndGlyphs">FP_PPAC0</text>
<text x="1132.5" y="392.8" font-size="12" fill="#1a0808" textLength="52" lengthAdjust="spacingAndGlyphs">FP_PPAC1</text>
<text x="1132.5" y="420.8" font-size="12" fill="#1a0808" textLength="37.3" lengthAdjust="spacingAndGlyphs">FP_slits</text>
<rect x="1111.5" y="433.5" width="89" height="21" fill="#f4a09c" stroke="#1010f0" stroke-width="1"/>
<text x="1132.5" y="448.8" font-size="12" fill="#fdf6d8" textLength="36" lengthAdjust="spacingAndGlyphs">FP_PIN</text>
<text x="1132.5" y="476.8" font-size="12" fill="#1a0808" textLength="33.8" lengthAdjust="spacingAndGlyphs">FP_SCI</text>
<text x="1167.8" y="66.7" font-size="32" fill="#ff0000" textLength="83" lengthAdjust="spacingAndGlyphs" stroke="#ff0000" stroke-width="0.6" stroke-linejoin="round">Select</text>
<text x="1263" y="66.7" font-size="32" fill="#ff0000" textLength="42.5" lengthAdjust="spacingAndGlyphs" stroke="#ff0000" stroke-width="0.6" stroke-linejoin="round">MC</text>
<rect x="1145" y="78" width="110" height="5" fill="#ff0000"/>
<path d="M1112 80.5Q1138 76.5 1157 67.2Q1150 74 1146.5 78V83Q1150 87 1157 94.3Q1138 84.5 1112 80.5Z" fill="#ff0000"/>
<text x="900.5" y="427.3" font-size="32" fill="#ff0000" textLength="83.5" lengthAdjust="spacingAndGlyphs" stroke="#ff0000" stroke-width="0.6" stroke-linejoin="round">Select</text>
<text x="996" y="427.3" font-size="32" fill="#ff0000" textLength="95.3" lengthAdjust="spacingAndGlyphs" stroke="#ff0000" stroke-width="0.6" stroke-linejoin="round">FP_PIN</text>
<rect x="969" y="442.6" width="112" height="4.6" fill="#ff0000"/>
<path d="M1110.5 445Q1085 441 1067 431.2Q1075 438 1079 442.6V447.2Q1075 452 1067 458.8Q1085 449 1110.5 445Z" fill="#ff0000"/>
<rect x="598.5" y="800.5" width="13" height="13" fill="#fff" stroke="#c4c4c4" stroke-width="1"/>
<text x="617.5" y="811.9" font-size="12.3" fill="#000" textLength="122" lengthAdjust="spacing">Show Disabled blocks</text>
<rect x="758.5" y="800.5" width="13" height="13" fill="#fff" stroke="#b4b4b4" stroke-width="1"/>
<path d="M761.5 806.5l3 3.6 4.6-7.6" fill="none" stroke="#000" stroke-width="1.7"/>
<text x="780" y="811.9" font-size="12.3" fill="#000" textLength="61.5" lengthAdjust="spacing">Z-q=0,0,0,0</text>
<rect x="884" y="796" width="89" height="21" fill="#f0f0f0"/>
<rect x="884" y="796" width="89" height="1" fill="#a0a0a0"/>
<rect x="884" y="796" width="1" height="21" fill="#a0a0a0"/>
<rect x="884" y="816" width="89" height="1" fill="#ffffff"/>
<rect x="972" y="796" width="1" height="21" fill="#ffffff"/>
<text x="902" y="809.8" font-size="12" fill="#000" textLength="45" lengthAdjust="spacing">Ncalc=0</text>
<rect x="980" y="796" width="99" height="21" fill="#f0f0f0"/>
<rect x="980" y="796" width="99" height="1" fill="#a0a0a0"/>
<rect x="980" y="796" width="1" height="21" fill="#a0a0a0"/>
<rect x="980" y="816" width="99" height="1" fill="#ffffff"/>
<rect x="1078" y="796" width="1" height="21" fill="#ffffff"/>
<text x="987.4" y="809.8" font-size="12" fill="#000" textLength="84.3" lengthAdjust="spacing">Sum=0.000e+0</text>
<rect x="1086" y="796" width="119" height="21" fill="#f0f0f0"/>
<rect x="1086" y="796" width="119" height="1" fill="#a0a0a0"/>
<rect x="1086" y="796" width="1" height="21" fill="#a0a0a0"/>
<rect x="1086" y="816" width="119" height="1" fill="#ffffff"/>
<rect x="1204" y="796" width="1" height="21" fill="#ffffff"/>
<text x="1101.4" y="809.8" font-size="12" fill="#000" textLength="88.3" lengthAdjust="spacing">DG=-0.06mm/%</text>
<rect x="1212" y="796" width="59" height="21" fill="#f0f0f0"/>
<rect x="1212" y="796" width="59" height="1" fill="#a0a0a0"/>
<rect x="1212" y="796" width="1" height="21" fill="#a0a0a0"/>
<rect x="1212" y="816" width="59" height="1" fill="#ffffff"/>
<rect x="1270" y="796" width="1" height="21" fill="#ffffff"/>
<text x="1223.2" y="809.8" font-size="12" fill="#000" textLength="37.9" lengthAdjust="spacing">NP=32</text>
<rect x="1278" y="796" width="59" height="21" fill="#f0f0f0"/>
<rect x="1278" y="796" width="59" height="1" fill="#a0a0a0"/>
<rect x="1278" y="796" width="1" height="21" fill="#a0a0a0"/>
<rect x="1278" y="816" width="59" height="1" fill="#ffffff"/>
<rect x="1336" y="796" width="1" height="21" fill="#ffffff"/>
<text x="1290" y="809.8" font-size="12" fill="#000" textLength="34" lengthAdjust="spacing">R=0x1</text>
<rect x="1343" y="816" width="2" height="2" fill="#bcbcbc"/>
<rect x="1346" y="813" width="2" height="2" fill="#bcbcbc"/>
<rect x="1346" y="816" width="2" height="2" fill="#bcbcbc"/>
<rect x="1349" y="810" width="2" height="2" fill="#bcbcbc"/>
<rect x="1349" y="813" width="2" height="2" fill="#bcbcbc"/>
<rect x="1349" y="816" width="2" height="2" fill="#bcbcbc"/>
<rect x="1352" y="807" width="2" height="2" fill="#bcbcbc"/>
<rect x="1352" y="810" width="2" height="2" fill="#bcbcbc"/>
<rect x="1352" y="813" width="2" height="2" fill="#bcbcbc"/>
<rect x="1352" y="816" width="2" height="2" fill="#bcbcbc"/>
</svg>
</body></html>
